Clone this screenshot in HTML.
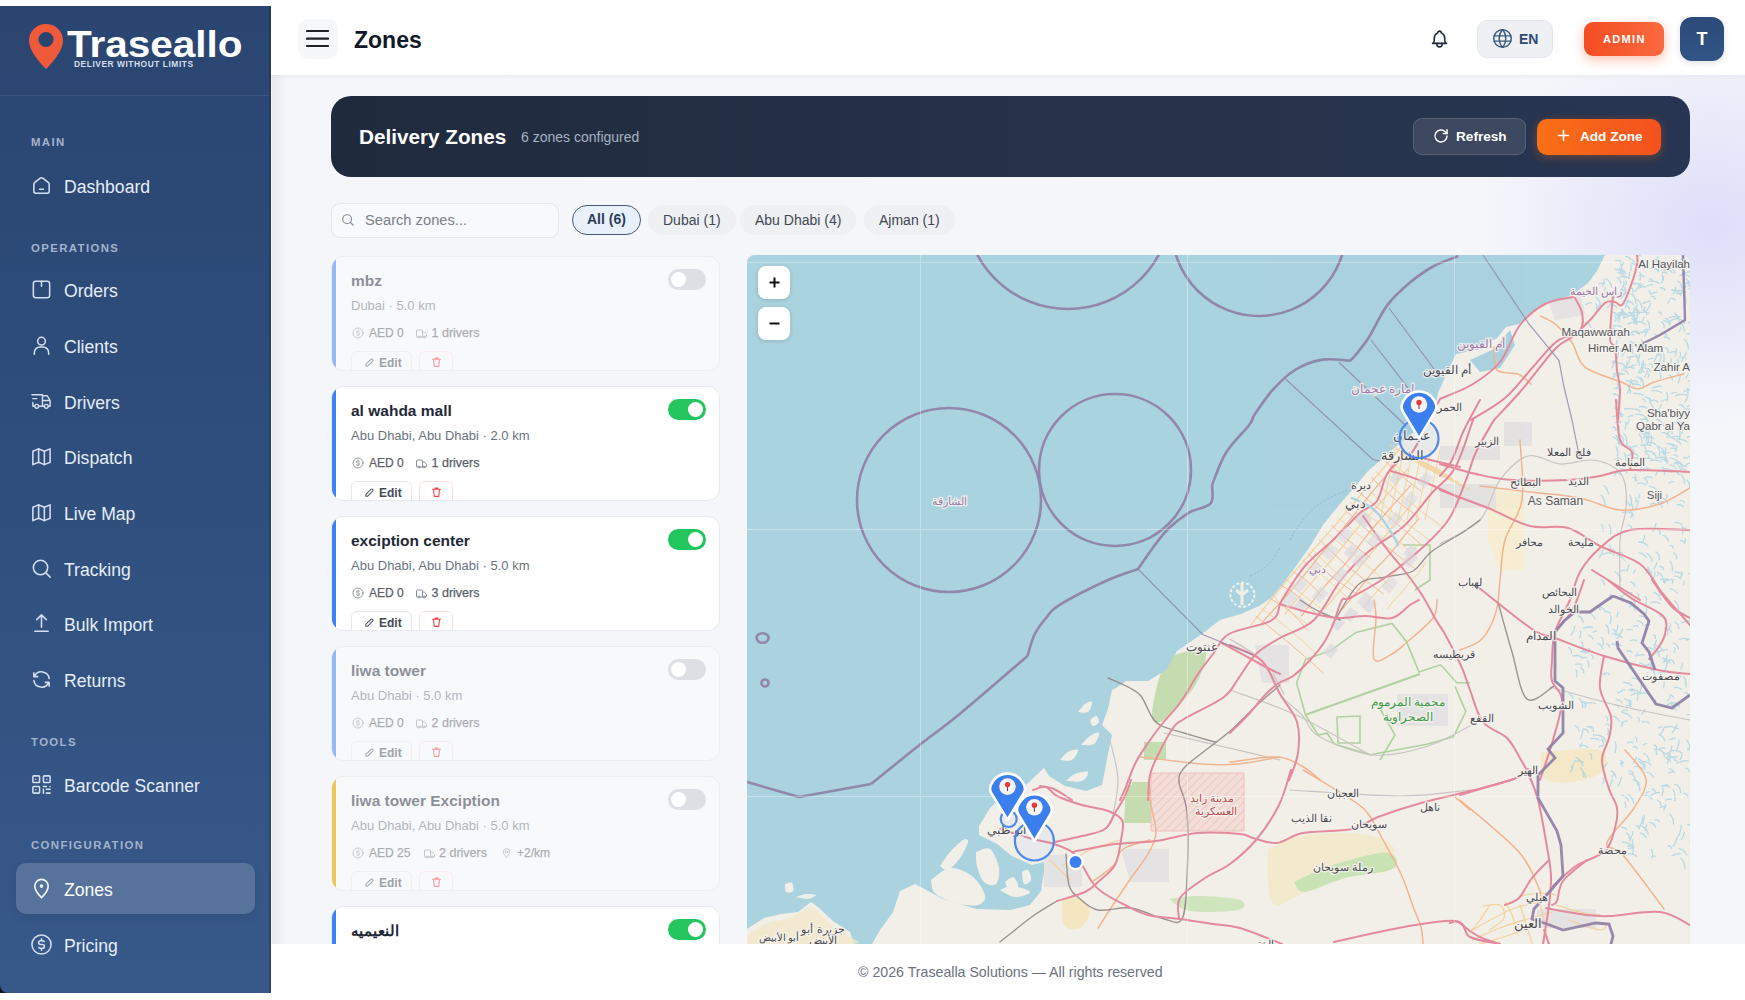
<!DOCTYPE html>
<html><head><meta charset="utf-8">
<style>
*{box-sizing:border-box;margin:0;padding:0}
html,body{width:1745px;height:1000px;overflow:hidden;background:#fff;font-family:"Liberation Sans",sans-serif}
svg{display:block}
#sb{position:absolute;left:0;top:6px;width:271px;height:987px;background:linear-gradient(180deg,#2a4570 0%,#2e4d7b 40%,#37598a 100%);border-bottom-left-radius:8px;overflow:hidden}
#sb .dv{position:absolute;left:0;top:89px;width:271px;height:1px;background:rgba(255,255,255,0.08)}
.sec{position:absolute;left:31px;font-size:11.4px;line-height:12px;font-weight:700;letter-spacing:1.38px;color:#a3b3cb;margin-top:-1px}
.it{position:absolute;left:64px;font-size:17.6px;line-height:20px;color:#e6edf7;white-space:nowrap;margin-top:1px}
.ic{position:absolute;left:30px;width:23px;height:23px;margin-top:-2px}
.ic svg{width:23px;height:23px}
.act{position:absolute;left:16px;width:239px;height:51px;border-radius:10px;background:rgba(255,255,255,0.17);box-shadow:0 4px 10px rgba(0,0,0,0.08)}
#hdr{position:absolute;left:271px;top:0;width:1474px;height:75px;background:#fff;}
#main{position:absolute;left:271px;top:75px;width:1474px;height:869px;background:radial-gradient(ellipse 230px 200px at 1440px 150px,rgba(214,214,250,0.75),rgba(214,214,250,0) 100%),#f5f6fa}
#foot{position:absolute;left:271px;top:944px;width:1474px;height:56px;background:#fff}
.card{position:absolute;left:331px;width:389px;height:115px;background:#fff;border:1px solid #e7e9ed;border-radius:12px;overflow:hidden}
.card .lb{position:absolute;left:-1px;top:-1px;bottom:-1px;width:5px;background:#3b82f6}
.card .t{position:absolute;left:19px;top:15px;font-size:15.5px;line-height:18px;font-weight:700;color:#1f2937;white-space:nowrap}
.card .s{position:absolute;left:19px;top:41px;font-size:13px;line-height:16px;color:#6b7280;white-space:nowrap}
.card .st{position:absolute;left:19px;top:68px;height:16px;white-space:nowrap}
.card .st span{position:absolute;top:0;font-size:12px;line-height:16px;font-weight:400;color:#5b616b;-webkit-text-stroke:0.25px #5b616b}
.card .st svg{position:absolute;top:2px}
.card .eb{position:absolute;left:19px;top:94px;width:61px;height:28px;border:1px solid #e5e7eb;border-radius:6px}
.card .eb span{position:absolute;left:27px;top:4px;font-size:12px;line-height:14px;font-weight:700;color:#454c58}
.card .eb svg{position:absolute;left:12px;top:5px}
.card .tb{position:absolute;left:87px;top:94px;width:34px;height:28px;border:1px solid #fadcdc;border-radius:6px}
.card .tb svg{position:absolute;left:11px;top:4px}
.tg{position:absolute;left:336px;top:12px;width:38px;height:21px;border-radius:11px;background:#22c55e}
.tg:after{content:"";position:absolute;right:3px;top:3px;width:15px;height:15px;border-radius:50%;background:#fff}
.tg.off{background:#dcdfe4}
.tg.off:after{right:auto;left:3px}
.card.off{background:#f8f9fb;border-color:#eceef1}
.card.off .fade{opacity:.5}
.card.off .lb{opacity:1}
.pill{position:absolute;top:205px;height:30px;border-radius:15px;font-size:14px;line-height:28px;font-weight:400;color:#3f4754;padding:0 14px;white-space:nowrap;background:#eff0f3;border:1px solid #eff0f3}
.pill.on{background:#e8f0fb;border:1.5px solid #475a72;color:#2c3e55;line-height:27px;font-weight:700}
.zb{position:absolute;left:758px;width:32px;height:33px;background:#fff;border-radius:8px;box-shadow:0 1px 4px rgba(0,0,0,0.15)}

</style></head><body>
<div id="hdr"></div>
<div id="main"></div>
<div style="position:absolute;left:271px;top:75px;width:1474px;height:4px;background:linear-gradient(180deg,rgba(0,0,0,0.035),rgba(0,0,0,0))"></div>
<div id="foot"></div>

<div style="position:absolute;left:272px;top:75px;width:16px;height:869px;background:linear-gradient(90deg,rgba(60,70,100,0.07),rgba(60,70,100,0))"></div>
<!-- SIDEBAR -->
<div style="position:absolute;left:0;top:979px;width:12px;height:14px;background:#0d1420"></div>
<div id="sb">
  <div class="dv"></div>
  <div style="position:absolute;right:0;top:0;width:2px;height:100%;background:rgba(25,38,60,0.32)"></div>
</div>
<div style="position:absolute;left:0;top:6px;width:271px;height:987px;pointer-events:none">
  <!-- logo -->
  <svg class="abs" style="position:absolute;left:27px;top:16px" width="40" height="50" viewBox="0 0 40 50">
    <path d="M19 2C9.6 2 2 9.4 2 18.6c0 11.2 13.2 24.8 17 28.6c3.8-3.8 17-17.4 17-28.6C36 9.4 28.4 2 19 2z" fill="#f05a3a"/>
    <circle cx="19" cy="17.5" r="7.6" fill="#2a4570"/>
  </svg>
  <div style="position:absolute;left:67px;top:19px;font-size:36px;line-height:40px;font-weight:700;color:#fff;transform:scaleX(1.125);transform-origin:0 0">Traseallo</div>
  <div style="position:absolute;left:74px;top:53px;font-size:8.4px;line-height:10px;font-weight:700;color:#d5deea;letter-spacing:0.55px">DELIVER WITHOUT LIMITS</div>

  <div class="sec" style="top:131px">MAIN</div>
  <div class="ic" style="top:170px"><svg width="19" height="19" viewBox="0 0 24 24" fill="none" stroke="#d5dff0" stroke-width="1.6" stroke-linecap="round" stroke-linejoin="round"><path d="M19 8.71l-5.333-4.148a2.666 2.666 0 0 0-3.274 0L5.06 8.71a2.665 2.665 0 0 0-1.03 2.105v7.2a2 2 0 0 0 2 2h12a2 2 0 0 0 2-2v-7.2c0-.823-.38-1.6-1.03-2.105"/><path d="M10 16h4"/></svg></div>
  <div class="it" style="top:170px">Dashboard</div>

  <div class="sec" style="top:237px">OPERATIONS</div>
  <div class="ic" style="top:274px"><svg width="19" height="19" viewBox="0 0 24 24" fill="none" stroke="#d5dff0" stroke-width="1.6" stroke-linecap="round" stroke-linejoin="round"><rect x="3.5" y="3.5" width="17" height="17" rx="2.5"/><path d="M12 3.5v5"/></svg></div>
  <div class="it" style="top:274px">Orders</div>
  <div class="ic" style="top:330px"><svg width="19" height="19" viewBox="0 0 24 24" fill="none" stroke="#d5dff0" stroke-width="1.6" stroke-linecap="round" stroke-linejoin="round"><circle cx="12" cy="7.5" r="4"/><path d="M4.5 21v-1.5a6 6 0 0 1 6-6h3a6 6 0 0 1 6 6V21"/></svg></div>
  <div class="it" style="top:330px">Clients</div>
  <div class="ic" style="top:386px;left:30px;width:23px"><svg width="23" height="21" viewBox="0 0 24 24" fill="none" stroke="#d5dff0" stroke-width="1.5" stroke-linecap="round" stroke-linejoin="round"><path d="M5 17a2 2 0 1 0 4 0a2 2 0 1 0-4 0"/><path d="M15 17a2 2 0 1 0 4 0a2 2 0 1 0-4 0"/><path d="M5 17h-2v-4m-1-8h11v12m-4 0h6m4 0h2v-6h-8m0-5h5l3 5"/><path d="M3 9h4"/></svg></div>
  <div class="it" style="top:386px">Drivers</div>
  <div class="ic" style="top:441px"><svg width="19" height="19" viewBox="0 0 24 24" fill="none" stroke="#d5dff0" stroke-width="1.6" stroke-linecap="round" stroke-linejoin="round"><path d="M3 6.5l6-2.5 6 2.5 6-2.5v14l-6 2.5-6-2.5-6 2.5z"/><path d="M9 4v14M15 6.5v14"/></svg></div>
  <div class="it" style="top:441px">Dispatch</div>
  <div class="ic" style="top:497px"><svg width="19" height="19" viewBox="0 0 24 24" fill="none" stroke="#d5dff0" stroke-width="1.6" stroke-linecap="round" stroke-linejoin="round"><path d="M3 6.5l6-2.5 6 2.5 6-2.5v14l-6 2.5-6-2.5-6 2.5z"/><path d="M9 4v14M15 6.5v14"/></svg></div>
  <div class="it" style="top:497px">Live Map</div>
  <div class="ic" style="top:553px"><svg width="19" height="19" viewBox="0 0 24 24" fill="none" stroke="#d5dff0" stroke-width="1.6" stroke-linecap="round" stroke-linejoin="round"><circle cx="11" cy="11" r="7.5"/><path d="M16.5 16.5L21 21"/></svg></div>
  <div class="it" style="top:553px">Tracking</div>
  <div class="ic" style="top:608px"><svg width="19" height="19" viewBox="0 0 24 24" fill="none" stroke="#d5dff0" stroke-width="1.6" stroke-linecap="round" stroke-linejoin="round"><path d="M5 20h14M12 16V3M7 8l5-5 5 5"/></svg></div>
  <div class="it" style="top:608px">Bulk Import</div>
  <div class="ic" style="top:664px"><svg width="19" height="19" viewBox="0 0 24 24" fill="none" stroke="#d5dff0" stroke-width="1.6" stroke-linecap="round" stroke-linejoin="round"><path d="M20 11A8.1 8.1 0 0 0 4.5 9M4 5v4h4"/><path d="M4 13a8.1 8.1 0 0 0 15.5 2m.5 4v-4h-4"/></svg></div>
  <div class="it" style="top:664px">Returns</div>

  <div class="sec" style="top:731px">TOOLS</div>
  <div class="ic" style="top:769px"><svg width="19" height="19" viewBox="0 0 24 24" fill="none" stroke="#d5dff0" stroke-width="1.6" stroke-linecap="round" stroke-linejoin="round"><rect x="3" y="3" width="7" height="7" rx="1"/><rect x="3" y="14" width="7" height="7" rx="1"/><rect x="14" y="3" width="7" height="7" rx="1"/><path d="M6 6.5v.01M6 17.5v.01M17.5 6.5v.01M14 14h3M21 14v.01M14 17v4M17 17h4M17 21h4"/></svg></div>
  <div class="it" style="top:769px">Barcode Scanner</div>

  <div class="sec" style="top:834px">CONFIGURATION</div>
  <div class="act" style="top:857px"></div>
  <div class="ic" style="top:873px"><svg width="19" height="19" viewBox="0 0 24 24" fill="none" stroke="#f2f6fc" stroke-width="1.7" stroke-linecap="round" stroke-linejoin="round"><path d="M12 21.5s-7-6.6-7-12a7 7 0 0 1 14 0c0 5.4-7 12-7 12z"/><circle cx="12" cy="9.5" r="1" fill="#f2f6fc"/></svg></div>
  <div class="it" style="top:873px;color:#fff">Zones</div>
  <div class="ic" style="top:929px"><svg width="19" height="19" viewBox="0 0 24 24" fill="none" stroke="#d5dff0" stroke-width="1.6" stroke-linecap="round" stroke-linejoin="round"><circle cx="12" cy="12" r="10"/><path d="M14.8 9a2 2 0 0 0-1.8-1h-2a2 2 0 0 0 0 4h2a2 2 0 0 1 0 4h-2a2 2 0 0 1-1.8-1M12 6v2M12 16v2"/></svg></div>
  <div class="it" style="top:929px">Pricing</div>
</div>

<!-- HEADER CONTENT -->
<div style="position:absolute;left:298px;top:19px;width:40px;height:40px;border-radius:10px;background:#f6f7f9"></div>
<svg style="position:absolute;left:306px;top:29px" width="23" height="20" viewBox="0 0 23 20"><path d="M1 2h21M1 9.6h21M1 17h21" stroke="#222" stroke-width="2.2" stroke-linecap="round"/></svg>
<div style="position:absolute;left:354px;top:27px;font-size:23px;line-height:26px;font-weight:700;color:#111827">Zones</div>

<svg style="position:absolute;left:1429px;top:28px" width="21" height="22" viewBox="0 0 24 24" fill="none" stroke="#1f2937" stroke-width="1.8" stroke-linecap="round" stroke-linejoin="round"><path d="M10 5a2 2 0 1 1 4 0a7 7 0 0 1 4 6v3a4 4 0 0 0 2 3H4a4 4 0 0 0 2-3v-3a7 7 0 0 1 4-6"/><path d="M9 17v1a3 3 0 0 0 6 0v-1"/></svg>
<div style="position:absolute;left:1477px;top:20px;width:76px;height:38px;border-radius:10px;background:#eef0f4;border:1px solid #e1e4e9"></div>
<svg style="position:absolute;left:1492px;top:28px" width="21" height="21" viewBox="0 0 24 24" fill="none" stroke="#3d5a80" stroke-width="1.7" stroke-linecap="round" stroke-linejoin="round"><circle cx="12" cy="12" r="10"/><path d="M2.6 9h18.8M2.6 15h18.8M11.5 2a17 17 0 0 0 0 20M12.5 2a17 17 0 0 1 0 20"/></svg>
<div style="position:absolute;left:1519px;top:31px;font-size:14px;line-height:16px;font-weight:700;color:#2d4a75">EN</div>
<div style="position:absolute;left:1584px;top:22px;width:80px;height:34px;border-radius:9px;background:linear-gradient(90deg,#f44d22,#fb6a3f);box-shadow:0 4px 12px rgba(244,80,30,0.35)"></div>
<div style="position:absolute;left:1603px;top:33px;font-size:11px;line-height:12px;font-weight:700;color:#fff;letter-spacing:1.35px">ADMIN</div>
<div style="position:absolute;left:1680px;top:17px;width:44px;height:44px;border-radius:12px;background:linear-gradient(180deg,#2b4a78,#315587);box-shadow:0 2px 6px rgba(0,0,0,0.12)"></div>
<div style="position:absolute;left:1680px;top:28px;width:44px;text-align:center;font-size:18px;line-height:22px;font-weight:700;color:#fff">T</div>

<!-- BANNER -->
<div style="position:absolute;left:331px;top:96px;width:1359px;height:81px;border-radius:20px;background:linear-gradient(90deg,#1f2a3d,#263349 60%,#283552)"></div>
<div style="position:absolute;left:359px;top:125px;font-size:20.7px;line-height:24px;font-weight:700;color:#fff">Delivery Zones</div>
<div style="position:absolute;left:521px;top:129px;font-size:14px;line-height:16px;color:#a8b2c2">6 zones configured</div>
<div style="position:absolute;left:1413px;top:118px;width:113px;height:37px;border-radius:9px;background:rgba(255,255,255,0.1);border:1px solid rgba(255,255,255,0.14)"></div>
<svg style="position:absolute;left:1432px;top:127px" width="18" height="18" viewBox="0 0 24 24" fill="none" stroke="#fff" stroke-width="2" stroke-linecap="round" stroke-linejoin="round"><path d="M20 12a8 8 0 1 1-2.3-5.6L20 8.5"/><path d="M20 3.5v5h-5"/></svg>
<div style="position:absolute;left:1456px;top:129px;font-size:13.6px;line-height:16px;font-weight:700;color:#fff">Refresh</div>
<div style="position:absolute;left:1537px;top:119px;width:124px;height:36px;border-radius:10px;background:linear-gradient(90deg,#f97016,#f4511e);box-shadow:0 2px 10px rgba(249,112,22,0.35)"></div>
<svg style="position:absolute;left:1557px;top:129px" width="13" height="13" viewBox="0 0 13 13"><path d="M6.5 1.5v10M1.5 6.5h10" stroke="#fff" stroke-width="1.6" stroke-linecap="round"/></svg>
<div style="position:absolute;left:1580px;top:129px;font-size:13.6px;line-height:16px;font-weight:700;color:#fff">Add Zone</div>

<!-- SEARCH + PILLS -->
<div style="position:absolute;left:331px;top:203px;width:228px;height:35px;border-radius:9px;background:#f8f9fb;border:1px solid #e3e6ea"></div>
<svg style="position:absolute;left:341px;top:213px" width="14" height="14" viewBox="0 0 24 24" fill="none" stroke="#8a9099" stroke-width="2" stroke-linecap="round"><circle cx="10.5" cy="10.5" r="7.5"/><path d="M16 16l5 5"/></svg>
<div style="position:absolute;left:365px;top:212px;font-size:14.7px;line-height:17px;color:#7b818a">Search zones...</div>
<div class="pill on" style="left:572px">All (6)</div>
<div class="pill" style="left:648px">Dubai (1)</div>
<div class="pill" style="left:740px">Abu Dhabi (4)</div>
<div class="pill" style="left:864px">Ajman (1)</div>

<!-- CARDS -->
<div class="card off" style="top:256px">
<div class="lb" style="background:#93b8f5"></div>
<div class="fade">
<div class="t" >mbz</div>
<div class="s">Dubai · 5.0 km</div>
<div class="st"><div class="abs" style="position:absolute;left:1px;top:0"><svg width="12" height="12" viewBox="0 0 24 24" fill="none" stroke="#8b919a" stroke-width="1.8" stroke-linecap="round"><circle cx="12" cy="12" r="10"/><path d="M14.8 9a2 2 0 0 0-1.8-1h-2a2 2 0 0 0 0 4h2a2 2 0 0 1 0 4h-2a2 2 0 0 1-1.8-1M12 6v2M12 16v2"/></svg></div><span style="left:18px">AED 0</span><div style="position:absolute;left:64.0px;top:1px"><svg width="13" height="12" viewBox="0 0 24 24" fill="none" stroke="#8b919a" stroke-width="2" stroke-linecap="round" stroke-linejoin="round"><path d="M14 18V6a2 2 0 0 0-2-2H4a2 2 0 0 0-2 2v11a1 1 0 0 0 1 1h2"/><path d="M15 18H9"/><path d="M19 18h2a1 1 0 0 0 1-1v-3.65a1 1 0 0 0-.22-.624l-3.48-4.35A1 1 0 0 0 17.52 8H14"/><circle cx="17" cy="18" r="2"/><circle cx="7" cy="18" r="2"/></svg></div><span style="left:80.5px;font-size:12.5px">1 drivers</span></div>
<div class="eb"><svg width="11" height="11" viewBox="0 0 24 24" fill="none" stroke="#4b5563" stroke-width="2.2" stroke-linecap="round" stroke-linejoin="round"><path d="M4 20h4L19 9a2.8 2.8 0 0 0-4-4L4 16z"/></svg><span>Edit</span></div>
<div class="tb"><svg width="11" height="12" viewBox="0 0 24 24" fill="none" stroke="#ef4444" stroke-width="2.4" stroke-linecap="round" stroke-linejoin="round"><path d="M3 6h18M9 6V3.5h6V6M5.5 6l1.3 14a1.5 1.5 0 0 0 1.5 1.5h7.4a1.5 1.5 0 0 0 1.5-1.5L18.5 6"/></svg></div>
</div>
<div class="tg off"></div>
</div>
<div class="card" style="top:386px">
<div class="lb" style="background:#3b82f6"></div>
<div class="fade">
<div class="t" >al wahda mall</div>
<div class="s">Abu Dhabi, Abu Dhabi · 2.0 km</div>
<div class="st"><div class="abs" style="position:absolute;left:1px;top:0"><svg width="12" height="12" viewBox="0 0 24 24" fill="none" stroke="#8b919a" stroke-width="1.8" stroke-linecap="round"><circle cx="12" cy="12" r="10"/><path d="M14.8 9a2 2 0 0 0-1.8-1h-2a2 2 0 0 0 0 4h2a2 2 0 0 1 0 4h-2a2 2 0 0 1-1.8-1M12 6v2M12 16v2"/></svg></div><span style="left:18px">AED 0</span><div style="position:absolute;left:64.0px;top:1px"><svg width="13" height="12" viewBox="0 0 24 24" fill="none" stroke="#8b919a" stroke-width="2" stroke-linecap="round" stroke-linejoin="round"><path d="M14 18V6a2 2 0 0 0-2-2H4a2 2 0 0 0-2 2v11a1 1 0 0 0 1 1h2"/><path d="M15 18H9"/><path d="M19 18h2a1 1 0 0 0 1-1v-3.65a1 1 0 0 0-.22-.624l-3.48-4.35A1 1 0 0 0 17.52 8H14"/><circle cx="17" cy="18" r="2"/><circle cx="7" cy="18" r="2"/></svg></div><span style="left:80.5px;font-size:12.5px">1 drivers</span></div>
<div class="eb"><svg width="11" height="11" viewBox="0 0 24 24" fill="none" stroke="#4b5563" stroke-width="2.2" stroke-linecap="round" stroke-linejoin="round"><path d="M4 20h4L19 9a2.8 2.8 0 0 0-4-4L4 16z"/></svg><span>Edit</span></div>
<div class="tb"><svg width="11" height="12" viewBox="0 0 24 24" fill="none" stroke="#ef4444" stroke-width="2.4" stroke-linecap="round" stroke-linejoin="round"><path d="M3 6h18M9 6V3.5h6V6M5.5 6l1.3 14a1.5 1.5 0 0 0 1.5 1.5h7.4a1.5 1.5 0 0 0 1.5-1.5L18.5 6"/></svg></div>
</div>
<div class="tg"></div>
</div>
<div class="card" style="top:516px">
<div class="lb" style="background:#3b82f6"></div>
<div class="fade">
<div class="t" >exciption center</div>
<div class="s">Abu Dhabi, Abu Dhabi · 5.0 km</div>
<div class="st"><div class="abs" style="position:absolute;left:1px;top:0"><svg width="12" height="12" viewBox="0 0 24 24" fill="none" stroke="#8b919a" stroke-width="1.8" stroke-linecap="round"><circle cx="12" cy="12" r="10"/><path d="M14.8 9a2 2 0 0 0-1.8-1h-2a2 2 0 0 0 0 4h2a2 2 0 0 1 0 4h-2a2 2 0 0 1-1.8-1M12 6v2M12 16v2"/></svg></div><span style="left:18px">AED 0</span><div style="position:absolute;left:64.0px;top:1px"><svg width="13" height="12" viewBox="0 0 24 24" fill="none" stroke="#8b919a" stroke-width="2" stroke-linecap="round" stroke-linejoin="round"><path d="M14 18V6a2 2 0 0 0-2-2H4a2 2 0 0 0-2 2v11a1 1 0 0 0 1 1h2"/><path d="M15 18H9"/><path d="M19 18h2a1 1 0 0 0 1-1v-3.65a1 1 0 0 0-.22-.624l-3.48-4.35A1 1 0 0 0 17.52 8H14"/><circle cx="17" cy="18" r="2"/><circle cx="7" cy="18" r="2"/></svg></div><span style="left:80.5px;font-size:12.5px">3 drivers</span></div>
<div class="eb"><svg width="11" height="11" viewBox="0 0 24 24" fill="none" stroke="#4b5563" stroke-width="2.2" stroke-linecap="round" stroke-linejoin="round"><path d="M4 20h4L19 9a2.8 2.8 0 0 0-4-4L4 16z"/></svg><span>Edit</span></div>
<div class="tb"><svg width="11" height="12" viewBox="0 0 24 24" fill="none" stroke="#ef4444" stroke-width="2.4" stroke-linecap="round" stroke-linejoin="round"><path d="M3 6h18M9 6V3.5h6V6M5.5 6l1.3 14a1.5 1.5 0 0 0 1.5 1.5h7.4a1.5 1.5 0 0 0 1.5-1.5L18.5 6"/></svg></div>
</div>
<div class="tg"></div>
</div>
<div class="card off" style="top:646px">
<div class="lb" style="background:#93b8f5"></div>
<div class="fade">
<div class="t" >liwa tower</div>
<div class="s">Abu Dhabi · 5.0 km</div>
<div class="st"><div class="abs" style="position:absolute;left:1px;top:0"><svg width="12" height="12" viewBox="0 0 24 24" fill="none" stroke="#8b919a" stroke-width="1.8" stroke-linecap="round"><circle cx="12" cy="12" r="10"/><path d="M14.8 9a2 2 0 0 0-1.8-1h-2a2 2 0 0 0 0 4h2a2 2 0 0 1 0 4h-2a2 2 0 0 1-1.8-1M12 6v2M12 16v2"/></svg></div><span style="left:18px">AED 0</span><div style="position:absolute;left:64.0px;top:1px"><svg width="13" height="12" viewBox="0 0 24 24" fill="none" stroke="#8b919a" stroke-width="2" stroke-linecap="round" stroke-linejoin="round"><path d="M14 18V6a2 2 0 0 0-2-2H4a2 2 0 0 0-2 2v11a1 1 0 0 0 1 1h2"/><path d="M15 18H9"/><path d="M19 18h2a1 1 0 0 0 1-1v-3.65a1 1 0 0 0-.22-.624l-3.48-4.35A1 1 0 0 0 17.52 8H14"/><circle cx="17" cy="18" r="2"/><circle cx="7" cy="18" r="2"/></svg></div><span style="left:80.5px;font-size:12.5px">2 drivers</span></div>
<div class="eb"><svg width="11" height="11" viewBox="0 0 24 24" fill="none" stroke="#4b5563" stroke-width="2.2" stroke-linecap="round" stroke-linejoin="round"><path d="M4 20h4L19 9a2.8 2.8 0 0 0-4-4L4 16z"/></svg><span>Edit</span></div>
<div class="tb"><svg width="11" height="12" viewBox="0 0 24 24" fill="none" stroke="#ef4444" stroke-width="2.4" stroke-linecap="round" stroke-linejoin="round"><path d="M3 6h18M9 6V3.5h6V6M5.5 6l1.3 14a1.5 1.5 0 0 0 1.5 1.5h7.4a1.5 1.5 0 0 0 1.5-1.5L18.5 6"/></svg></div>
</div>
<div class="tg off"></div>
</div>
<div class="card off" style="top:776px">
<div class="lb" style="background:#ebc659"></div>
<div class="fade">
<div class="t" >liwa tower Exciption</div>
<div class="s">Abu Dhabi, Abu Dhabi · 5.0 km</div>
<div class="st"><div class="abs" style="position:absolute;left:1px;top:0"><svg width="12" height="12" viewBox="0 0 24 24" fill="none" stroke="#8b919a" stroke-width="1.8" stroke-linecap="round"><circle cx="12" cy="12" r="10"/><path d="M14.8 9a2 2 0 0 0-1.8-1h-2a2 2 0 0 0 0 4h2a2 2 0 0 1 0 4h-2a2 2 0 0 1-1.8-1M12 6v2M12 16v2"/></svg></div><span style="left:18px">AED 25</span><div style="position:absolute;left:71.5px;top:1px"><svg width="13" height="12" viewBox="0 0 24 24" fill="none" stroke="#8b919a" stroke-width="2" stroke-linecap="round" stroke-linejoin="round"><path d="M14 18V6a2 2 0 0 0-2-2H4a2 2 0 0 0-2 2v11a1 1 0 0 0 1 1h2"/><path d="M15 18H9"/><path d="M19 18h2a1 1 0 0 0 1-1v-3.65a1 1 0 0 0-.22-.624l-3.48-4.35A1 1 0 0 0 17.52 8H14"/><circle cx="17" cy="18" r="2"/><circle cx="7" cy="18" r="2"/></svg></div><span style="left:88.0px;font-size:12.5px">2 drivers</span><div style="position:absolute;left:150.0px;top:0"><svg width="11" height="12" viewBox="0 0 24 24" fill="none" stroke="#8b919a" stroke-width="2" stroke-linecap="round"><path d="M12 21.5s-7-6.6-7-12a7 7 0 0 1 14 0c0 5.4-7 12-7 12z"/><circle cx="12" cy="9.5" r="2.5"/></svg></div><span style="left:166.0px;font-weight:400">+2/km</span></div>
<div class="eb"><svg width="11" height="11" viewBox="0 0 24 24" fill="none" stroke="#4b5563" stroke-width="2.2" stroke-linecap="round" stroke-linejoin="round"><path d="M4 20h4L19 9a2.8 2.8 0 0 0-4-4L4 16z"/></svg><span>Edit</span></div>
<div class="tb"><svg width="11" height="12" viewBox="0 0 24 24" fill="none" stroke="#ef4444" stroke-width="2.4" stroke-linecap="round" stroke-linejoin="round"><path d="M3 6h18M9 6V3.5h6V6M5.5 6l1.3 14a1.5 1.5 0 0 0 1.5 1.5h7.4a1.5 1.5 0 0 0 1.5-1.5L18.5 6"/></svg></div>
</div>
<div class="tg off"></div>
</div>
<div class="card" style="top:906px">
<div class="lb" style="background:#3b82f6"></div>
<div class="fade">
<div class="t" style="font-size:15px">النعيميه</div>
<div class="s">Abu Dhabi · 5.0 km</div>
<div class="st"><div class="abs" style="position:absolute;left:1px;top:0"><svg width="12" height="12" viewBox="0 0 24 24" fill="none" stroke="#8b919a" stroke-width="1.8" stroke-linecap="round"><circle cx="12" cy="12" r="10"/><path d="M14.8 9a2 2 0 0 0-1.8-1h-2a2 2 0 0 0 0 4h2a2 2 0 0 1 0 4h-2a2 2 0 0 1-1.8-1M12 6v2M12 16v2"/></svg></div><span style="left:18px">AED 0</span><div style="position:absolute;left:64.0px;top:1px"><svg width="13" height="12" viewBox="0 0 24 24" fill="none" stroke="#8b919a" stroke-width="2" stroke-linecap="round" stroke-linejoin="round"><path d="M14 18V6a2 2 0 0 0-2-2H4a2 2 0 0 0-2 2v11a1 1 0 0 0 1 1h2"/><path d="M15 18H9"/><path d="M19 18h2a1 1 0 0 0 1-1v-3.65a1 1 0 0 0-.22-.624l-3.48-4.35A1 1 0 0 0 17.52 8H14"/><circle cx="17" cy="18" r="2"/><circle cx="7" cy="18" r="2"/></svg></div><span style="left:80.5px;font-size:12.5px">1 drivers</span></div>
<div class="eb"><svg width="11" height="11" viewBox="0 0 24 24" fill="none" stroke="#4b5563" stroke-width="2.2" stroke-linecap="round" stroke-linejoin="round"><path d="M4 20h4L19 9a2.8 2.8 0 0 0-4-4L4 16z"/></svg><span>Edit</span></div>
<div class="tb"><svg width="11" height="12" viewBox="0 0 24 24" fill="none" stroke="#ef4444" stroke-width="2.4" stroke-linecap="round" stroke-linejoin="round"><path d="M3 6h18M9 6V3.5h6V6M5.5 6l1.3 14a1.5 1.5 0 0 0 1.5 1.5h7.4a1.5 1.5 0 0 0 1.5-1.5L18.5 6"/></svg></div>
</div>
<div class="tg"></div>
</div>

<!-- MAP -->
<div style="position:absolute;left:747px;top:255px;width:943px;height:689px;border-radius:8px 8px 0 0;overflow:hidden;background:#aad3df">
<svg width="943" height="689" viewBox="747 255 943 689" style="position:absolute;left:0;top:0">
<defs><pattern id="hatch" width="6" height="6" patternUnits="userSpaceOnUse" patternTransform="rotate(45)"><rect width="6" height="6" fill="#f3ddd8"/><line x1="0" y1="0" x2="0" y2="6" stroke="#e9b9b0" stroke-width="1.2"/></pattern></defs>
<rect x="747" y="255" width="943" height="689" fill="#f2efe9"/>
<path d="M1268.0,850.0 C1273.3,847.7 1284.7,838.7 1300.0,836.0 C1315.3,833.3 1344.7,832.5 1360.0,834.0 C1375.3,835.5 1387.3,839.0 1392.0,845.0 C1396.7,851.0 1396.7,864.5 1388.0,870.0 C1379.3,875.5 1354.7,873.8 1340.0,878.0 C1325.3,882.2 1310.8,890.5 1300.0,895.0 C1289.2,899.5 1280.3,907.5 1275.0,905.0 C1269.7,902.5 1269.2,889.2 1268.0,880.0 C1266.8,870.8 1268.0,855.0 1268.0,850.0Z" fill="#f3e9cc" />
<path d="M1541.0,752.0 C1550.8,751.7 1589.8,746.7 1600.0,750.0 C1610.2,753.3 1607.0,766.7 1602.0,772.0 C1597.0,777.3 1579.5,781.0 1570.0,782.0 C1560.5,783.0 1549.8,783.0 1545.0,778.0 C1540.2,773.0 1541.7,756.3 1541.0,752.0Z" fill="#f4e8c8" />
<path d="M1488.0,490.0 L1524.0,492.0 L1524.0,570.0 L1500.0,570.0 L1488.0,540.0Z" fill="#f6edd3" />
<path d="M1062.0,901.0 C1065.0,900.5 1075.3,896.2 1080.0,898.0 C1084.7,899.8 1090.0,907.0 1090.0,912.0 C1090.0,917.0 1084.3,925.8 1080.0,928.0 C1075.7,930.2 1067.0,929.5 1064.0,925.0 C1061.0,920.5 1062.3,905.0 1062.0,901.0Z" fill="#f4e6c0" />
<path d="M1294.0,882.0 C1300.0,879.3 1315.7,870.8 1330.0,866.0 C1344.3,861.2 1369.0,854.3 1380.0,853.0 C1391.0,851.7 1394.3,855.2 1396.0,858.0 C1397.7,860.8 1398.5,866.7 1390.0,870.0 C1381.5,873.3 1359.2,874.3 1345.0,878.0 C1330.8,881.7 1313.5,891.3 1305.0,892.0 C1296.5,892.7 1295.8,883.7 1294.0,882.0Z" fill="#c9e3b5" />
<path d="M1167.0,658.0 C1170.0,657.0 1178.7,653.3 1185.0,652.0 C1191.3,650.7 1202.0,647.3 1205.0,650.0 C1208.0,652.7 1205.2,661.3 1203.0,668.0 C1200.8,674.7 1197.2,682.7 1192.0,690.0 C1186.8,697.3 1177.3,706.7 1172.0,712.0 C1166.7,717.3 1163.3,721.0 1160.0,722.0 C1156.7,723.0 1152.7,723.3 1152.0,718.0 C1151.3,712.7 1154.3,698.0 1156.0,690.0 C1157.7,682.0 1160.2,675.3 1162.0,670.0 C1163.8,664.7 1166.2,660.0 1167.0,658.0Z" fill="#c5dcb0" />
<path d="M1144.0,742.0 L1166.0,742.0 L1166.0,760.0 L1144.0,760.0Z" fill="#c5dcb0" />
<path d="M1126.0,785.0 L1151.0,785.0 L1151.0,823.0 L1124.0,823.0Z" fill="#c5dcb0" />
<path d="M1132.0,782.0 L1148.0,782.0 L1148.0,800.0 L1132.0,800.0Z" fill="#c5dcb0" />
<path d="M1169.0,899.0 C1174.2,898.5 1188.2,895.8 1200.0,896.0 C1211.8,896.2 1233.7,897.7 1240.0,900.0 C1246.3,902.3 1246.3,908.2 1238.0,910.0 C1229.7,911.8 1201.5,912.8 1190.0,911.0 C1178.5,909.2 1172.5,901.0 1169.0,899.0Z" fill="#cfe5bd" />
<path d="M1151.0,773.0 L1244.0,773.0 L1244.0,831.0 L1151.0,831.0Z" fill="url(#hatch)" stroke="#eec2bb" stroke-width="1"/>
<path d="M1255.0,645.0 L1289.0,645.0 L1289.0,683.0 L1262.0,683.0Z" fill="#e2dfe0" opacity="0.85"/>
<path d="M1121.0,849.0 L1169.0,849.0 L1169.0,882.0 L1130.0,882.0Z" fill="#e2dfe0" opacity="0.85"/>
<path d="M1044.0,855.0 L1082.0,855.0 L1082.0,887.0 L1044.0,887.0Z" fill="#e2dfe0" opacity="0.85"/>
<path d="M1397.0,694.0 L1448.0,694.0 L1448.0,726.0 L1397.0,726.0Z" fill="#e2dfe0" opacity="0.85"/>
<path d="M1504.0,422.0 L1532.0,422.0 L1532.0,446.0 L1504.0,446.0Z" fill="#e2dfe0" opacity="0.85"/>
<path d="M1440.0,484.0 L1496.0,484.0 L1496.0,508.0 L1440.0,508.0Z" fill="#e2dfe0" opacity="0.85"/>
<path d="M1440.0,446.0 L1500.0,446.0 L1500.0,460.0 L1440.0,460.0Z" fill="#e2dfe0" opacity="0.85"/>
<path d="M1537.0,909.0 L1596.0,909.0 L1596.0,928.0 L1537.0,928.0Z" fill="#e2dfe0" opacity="0.85"/>
<path d="M1548.0,300.0 L1580.0,292.0 L1585.0,315.0 L1555.0,320.0Z" fill="#e2dfe0" opacity="0.85"/>
<path d="M1605.0,255.0 L1597.0,271.0 L1588.0,283.0 L1572.0,295.0 L1555.0,300.0 L1542.0,305.0 L1532.0,314.0 L1519.0,324.0 L1506.0,327.0 L1497.0,338.0 L1480.0,348.0 L1466.0,352.0 L1456.0,354.0 L1446.0,375.0 L1438.0,393.0 L1435.0,410.0 L1429.0,419.0 L1416.0,430.0 L1403.0,441.0 L1393.0,449.0 L1382.0,459.0 L1368.0,471.0 L1354.0,488.0 L1339.0,505.0 L1323.0,525.0 L1309.0,548.0 L1296.0,566.0 L1283.0,584.0 L1271.0,598.0 L1259.0,606.0 L1241.0,614.0 L1220.0,620.0 L1202.0,634.0 L1177.0,651.0 L1166.0,670.0 L1148.0,681.0 L1126.0,681.0 L1116.0,688.0 L1112.0,690.0 L1108.0,709.0 L1102.0,725.0 L1112.0,735.0 L1107.0,759.0 L1102.0,785.0 L1086.0,791.0 L1065.0,786.0 L1049.0,776.0 L1044.0,768.0 L1024.0,787.0 L1005.0,793.0 L990.0,808.0 L979.0,826.0 L979.0,835.0 L997.0,844.0 L1012.0,856.0 L1032.0,865.0 L1044.0,862.0 L1044.0,872.0 L1041.0,891.0 L1030.0,905.0 L1010.0,910.0 L976.0,909.0 L943.0,899.0 L915.0,884.0 L900.0,891.0 L893.0,912.0 L880.0,930.0 L872.0,944.0 L854.0,944.0 L850.0,932.0 L833.0,921.0 L818.0,907.0 L811.0,902.0 L798.0,912.0 L781.0,914.0 L764.0,918.0 L747.0,929.0 L747.0,255.0Z" fill="#aad3df"/>
<path d="M747.0,936.0 C750.0,934.0 757.8,927.0 765.0,924.0 C772.2,921.0 782.3,920.7 790.0,918.0 C797.7,915.3 804.3,907.0 811.0,908.0 C817.7,909.0 823.8,919.3 830.0,924.0 C836.2,928.7 844.3,932.7 848.0,936.0 C851.7,939.3 868.8,942.7 852.0,944.0 C835.2,945.3 764.5,945.3 747.0,944.0 C729.5,942.7 747.0,937.3 747.0,936.0Z" fill="#f3e7c4" opacity="0.7"/>
<path d="M796.0,897.0 C797.7,896.5 802.7,894.3 806.0,894.0 C809.3,893.7 815.7,894.2 816.0,895.0 C816.3,895.8 811.3,898.7 808.0,899.0 C804.7,899.3 798.0,897.3 796.0,897.0Z" fill="#e8efe9" />
<path d="M940.0,866.0 C941.7,863.7 946.2,856.3 950.0,852.0 C953.8,847.7 960.0,841.7 963.0,840.0 C966.0,838.3 968.5,839.0 968.0,842.0 C967.5,845.0 963.3,853.3 960.0,858.0 C956.7,862.7 951.3,868.7 948.0,870.0 C944.7,871.3 941.3,866.7 940.0,866.0Z" fill="#f2efe9" />
<path d="M976.0,852.0 C978.3,851.5 986.2,846.3 990.0,849.0 C993.8,851.7 998.0,862.2 999.0,868.0 C1000.0,873.8 998.5,881.7 996.0,884.0 C993.5,886.3 987.2,885.0 984.0,882.0 C980.8,879.0 978.3,871.0 977.0,866.0 C975.7,861.0 976.2,854.3 976.0,852.0Z" fill="#f2efe9" />
<path d="M931.0,880.0 C934.2,878.0 943.2,868.7 950.0,868.0 C956.8,867.3 966.2,871.5 972.0,876.0 C977.8,880.5 984.0,890.2 985.0,895.0 C986.0,899.8 983.0,903.7 978.0,905.0 C973.0,906.3 962.2,905.0 955.0,903.0 C947.8,901.0 939.0,896.8 935.0,893.0 C931.0,889.2 931.7,882.2 931.0,880.0Z" fill="#f2efe9" />
<path d="M1078.0,712.0 C1079.2,710.7 1082.7,705.7 1085.0,704.0 C1087.3,702.3 1091.5,700.7 1092.0,702.0 C1092.5,703.3 1090.3,710.3 1088.0,712.0 C1085.7,713.7 1079.7,712.0 1078.0,712.0Z" fill="#f2efe9" />
<path d="M1081.0,745.0 C1082.5,743.5 1087.0,738.0 1090.0,736.0 C1093.0,734.0 1098.3,731.7 1099.0,733.0 C1099.7,734.3 1097.0,742.0 1094.0,744.0 C1091.0,746.0 1083.2,744.8 1081.0,745.0Z" fill="#f2efe9" />
<path d="M1060.0,760.0 C1061.3,758.7 1065.0,753.7 1068.0,752.0 C1071.0,750.3 1077.3,748.7 1078.0,750.0 C1078.7,751.3 1075.0,758.3 1072.0,760.0 C1069.0,761.7 1062.0,760.0 1060.0,760.0Z" fill="#f2efe9" />
<path d="M1066.0,781.0 C1067.5,779.8 1071.3,775.5 1075.0,774.0 C1078.7,772.5 1086.8,770.8 1088.0,772.0 C1089.2,773.2 1085.7,779.5 1082.0,781.0 C1078.3,782.5 1068.7,781.0 1066.0,781.0Z" fill="#f2efe9" />
<path d="M1090.0,720.0 C1091.0,719.3 1094.5,715.7 1096.0,716.0 C1097.5,716.3 1099.5,720.3 1099.0,722.0 C1098.5,723.7 1094.5,726.3 1093.0,726.0 C1091.5,725.7 1090.5,721.0 1090.0,720.0Z" fill="#f2efe9" />
<path d="M785.0,884.0 C786.2,883.8 790.7,881.8 792.0,883.0 C793.3,884.2 794.0,889.5 793.0,891.0 C792.0,892.5 787.3,893.2 786.0,892.0 C784.7,890.8 785.2,885.3 785.0,884.0Z" fill="#f2efe9" />
<path d="M1005.0,882.0 C1006.3,881.2 1010.8,876.3 1013.0,877.0 C1015.2,877.7 1018.5,883.7 1018.0,886.0 C1017.5,888.3 1012.2,891.7 1010.0,891.0 C1007.8,890.3 1005.8,883.5 1005.0,882.0Z" fill="#f2efe9" />
<path d="M1022.0,872.0 C1023.0,871.7 1026.5,868.7 1028.0,870.0 C1029.5,871.3 1031.7,877.7 1031.0,880.0 C1030.3,882.3 1025.5,885.3 1024.0,884.0 C1022.5,882.7 1022.3,874.0 1022.0,872.0Z" fill="#f2efe9" />
<path d="M1000.0,890.0 C1002.0,889.3 1007.0,885.7 1012.0,886.0 C1017.0,886.3 1029.5,890.2 1030.0,892.0 C1030.5,893.8 1020.0,897.3 1015.0,897.0 C1010.0,896.7 1002.5,891.2 1000.0,890.0Z" fill="#f2efe9" />
<path d="M1494.0,349.0 L1510.0,330.0 L1515.0,345.0 L1500.0,368.0 L1480.0,372.0 L1470.0,360.0Z" fill="#aad3df" />
<circle cx="1242.4" cy="594.8" r="12" fill="none" stroke="#eef3f3" stroke-width="2" stroke-dasharray="3 2"/>
<path d="M1242,583 v22 M1236,590 l6,5 6,-5" stroke="#f0efe6" stroke-width="3" fill="none"/>
<path d="M1290,540 q20,-40 60,-50 M1280,548 q-10,20 -30,28" fill="none" stroke="#8fb9d0" stroke-width="1" stroke-dasharray="2 2"/>
<path d="M1637.3,288.3 q6.6,-2.6 9.1,-1.2 M1653.8,334.3 q3.4,-0.2 2.7,3.5 M1614.9,348.8 q4.3,-2.2 4.5,-0.4 M1645.1,432.9 q4.4,-1.4 4.9,1.2 M1660.9,458.8 q5.4,0.6 6.8,5.2 M1688.1,266.0 q7.0,0.1 10.0,4.2 M1623.3,281.2 q1.7,1.2 -0.6,6.4 M1626.1,380.5 q5.8,0.5 7.6,5.1 M1654.7,269.4 q4.2,-1.6 4.4,0.9 M1665.1,347.5 q3.5,0.9 2.9,5.8 M1647.3,320.2 q3.0,3.1 2.0,10.2 M1631.0,378.9 q1.1,2.0 -1.9,8.0 M1668.9,317.6 q7.9,-2.1 11.8,-0.2 M1644.6,418.0 q3.7,-0.0 3.3,4.0 M1615.1,399.0 q4.4,2.4 4.8,8.9 M1680.3,323.1 q4.1,2.3 4.1,8.6 M1657.2,353.6 q-0.1,2.9 -4.1,9.9 M1649.0,398.1 q2.4,0.2 0.8,4.4 M1662.5,468.5 q6.9,-0.0 9.8,4.0 M1642.1,399.1 q3.4,-0.5 2.9,3.0 M1625.1,281.1 q2.1,0.2 0.1,4.5 M1622.1,309.0 q1.2,1.5 -1.6,7.0 M1618.3,352.1 q1.0,2.1 -2.1,8.1 M1675.9,440.9 q4.4,-0.0 4.8,4.0 M1640.0,445.2 q7.8,-1.6 11.6,0.7 M1625.7,305.6 q3.9,0.2 3.8,4.5 M1658.0,312.2 q3.5,-0.7 3.1,2.6 M1640.8,377.2 q3.2,3.7 2.5,11.4 M1652.2,388.2 q6.6,-2.8 9.3,-1.6 M1682.2,422.9 q1.8,3.5 -0.5,11.0 M1642.6,341.4 q2.8,0.3 1.6,4.5 M1616.9,270.4 q4.8,-1.7 5.6,0.5 M1638.5,267.3 q4.0,-1.9 4.0,0.3 M1619.9,333.8 q1.5,0.0 -0.9,4.1 M1659.9,287.8 q4.6,-0.5 5.2,3.1 M1640.4,282.3 q-0.6,2.7 -5.3,9.4 M1648.3,359.5 q4.3,-2.1 4.7,-0.3 M1638.7,312.7 q7.3,-1.5 10.6,0.9 M1613.8,459.5 q6.1,-1.8 8.2,0.4 M1654.4,261.8 q0.1,1.7 -3.8,7.3 M1679.3,405.0 q4.5,-0.3 5.1,3.3 M1625.0,421.2 q2.0,2.1 0.0,8.3 M1637.7,303.7 q-0.5,2.6 -5.0,9.2 M1678.5,428.5 q2.5,3.2 1.0,10.5 M1629.7,366.8 q5.3,-2.8 6.7,-1.6 M1614.2,315.8 q2.6,1.0 1.3,5.9 M1686.6,351.7 q-0.8,3.0 -5.5,10.1 M1686.5,334.0 q4.8,-1.3 5.6,1.4 M1627.3,299.7 q0.7,2.3 -2.6,8.6 M1677.6,358.6 q1.8,2.6 -0.4,9.2 M1618.6,397.4 q2.0,3.6 -0.1,11.3 M1670.5,358.3 q1.9,0.7 -0.1,5.4 M1637.9,427.4 q6.7,1.6 9.4,7.1 M1643.3,458.6 q6.9,-1.5 9.7,1.1 M1621.9,288.3 q1.6,3.6 -0.7,11.2 M1623.4,432.9 q3.7,3.7 3.4,11.3 M1639.3,373.4 q4.4,-2.7 4.9,-1.3 M1687.7,395.0 q0.5,1.8 -3.0,7.7 M1645.8,442.6 q7.2,-0.9 10.4,2.2 M1631.6,318.7 q3.3,0.6 2.6,5.3 M1632.2,345.7 q1.2,0.4 -1.6,4.8 M1639.6,354.0 q0.7,2.1 -2.6,8.3 M1644.8,452.4 q4.2,1.3 4.5,6.6 M1652.8,260.0 q5.7,-1.5 7.4,1.0 M1612.3,427.0 q3.8,-0.0 3.6,4.0 M1668.6,375.1 q3.9,0.7 3.9,5.4 M1655.3,423.8 q3.2,0.1 2.4,4.2 M1631.4,315.3 q5.1,2.0 6.2,8.1 M1655.8,418.6 q6.1,1.9 8.2,7.8 M1659.8,364.2 q2.8,2.0 1.7,7.9 M1647.3,370.1 q0.5,1.6 -3.0,7.2 M1666.5,443.6 q7.5,-0.2 10.9,3.7 M1655.6,457.9 q7.4,-1.8 10.7,0.3 M1621.5,350.6 q4.2,-1.4 4.4,1.3 M1617.7,399.3 q0.6,2.9 -2.9,9.9 M1624.0,409.2 q6.6,-1.8 9.3,0.4 M1680.9,463.1 q0.8,0.6 -2.3,5.3 M1643.1,360.3 q1.2,3.9 -1.5,11.8 M1624.6,348.3 q5.5,-0.0 7.1,4.0 M1627.3,324.2 q6.7,-3.2 9.5,-2.4 M1655.2,350.3 q3.8,-1.0 3.6,2.0 M1660.7,365.6 q0.9,-0.0 -2.1,4.0 M1673.5,463.9 q4.3,-1.2 4.6,1.6 M1615.1,422.7 q5.1,-2.0 6.2,0.1 M1644.9,451.0 q7.0,-0.3 10.0,3.3 M1623.7,452.7 q2.8,2.2 1.6,8.4 M1619.0,268.3 q5.6,1.1 7.1,6.3 M1617.6,456.8 q1.8,2.5 -0.5,9.1 M1618.5,439.2 q1.6,0.2 -0.9,4.4 M1647.4,328.6 q0.5,2.0 -2.9,7.9 M1632.9,283.7 q6.0,-0.9 7.9,2.2 M1620.5,290.6 q4.2,-1.6 4.3,0.8 M1636.3,321.3 q6.6,-0.1 9.3,3.9 M1651.0,294.1 q5.3,-2.9 6.6,-1.7 M1631.5,259.3 q4.6,2.2 5.1,8.4 M1626.8,357.6 q7.7,-2.3 11.5,-0.5 M1675.9,348.5 q1.5,1.9 -1.0,7.9 M1642.7,364.4 q-0.2,2.2 -4.4,8.4 M1638.7,434.1 q3.6,2.5 3.3,9.1 M1643.6,330.4 q4.2,-2.0 4.4,0.1 M1617.5,414.6 q5.0,-1.7 6.0,0.6 M1618.6,436.0 q3.4,3.3 2.8,10.6 M1634.0,307.8 q4.2,0.3 4.4,4.6 M1624.3,351.4 q0.7,0.8 -2.6,5.5 M1687.9,373.1 q0.7,0.7 -2.6,5.4 M1636.1,332.3 q3.6,-0.8 3.3,2.3 M1649.0,363.6 q3.7,0.2 3.4,4.4 M1612.4,312.5 q3.9,-0.6 3.7,2.9 M1615.3,260.8 q5.1,-1.2 6.2,1.6 M1657.7,369.2 q3.4,2.8 2.9,9.6 M1667.8,444.1 q5.2,-0.3 6.3,3.3 M1688.8,288.0 q3.6,2.6 3.1,9.3 M1615.4,434.8 q4.0,3.2 4.0,10.4 M1669.2,429.8 q3.5,0.1 2.9,4.2 M1651.3,434.7 q1.4,3.2 -1.2,10.4 M1657.6,447.1 q3.0,2.6 1.9,9.3 M1629.9,262.7 q4.1,-0.6 4.3,2.7 M1620.2,434.9 q3.5,2.0 3.0,7.9 M1660.8,401.7 q5.8,-3.1 7.6,-2.3 M1674.2,416.1 q4.2,1.3 4.4,6.7 M1663.4,270.1 q6.7,-0.5 9.4,3.0 M1617.8,312.8 q6.8,-1.1 9.7,1.9 M1669.7,464.8 q5.2,0.3 6.5,4.6 M1649.4,402.3 q3.9,2.7 3.9,9.4 M1662.1,272.6 q4.5,-1.2 4.9,1.6 M1670.0,321.1 q6.1,-3.1 8.2,-2.3 M1616.7,313.5 q3.0,2.6 2.0,9.2 M1664.7,318.2 q4.8,1.0 5.6,5.9 M1648.4,281.4 q7.5,-1.0 11.0,2.0 M1688.3,456.4 q3.4,-0.5 2.9,3.0 M1676.0,463.2 q5.6,-0.7 7.1,2.6 M1628.4,458.4 q3.3,0.5 2.6,5.1 M1623.1,368.2 q7.8,-1.9 11.6,0.2 M1676.0,364.9 q3.0,3.5 2.0,10.9 M1630.0,448.1 q5.8,-2.9 7.7,-1.9 M1612.3,361.2 q5.5,-0.4 6.9,3.1 M1623.0,329.6 q1.5,1.2 -0.9,6.5 M1612.1,416.7 q7.4,-2.1 10.7,-0.1 M1684.3,408.6 q7.2,0.2 10.3,4.3 M1641.0,340.1 q4.6,3.4 5.3,10.8 M1640.1,347.6 q5.0,-2.6 6.1,-1.1 M1619.9,434.6 q0.9,0.9 -2.3,5.8 M1631.4,312.9 q6.0,-1.4 8.0,1.3 M1641.1,460.6 q1.6,3.5 -0.9,11.0 M1661.2,451.5 q5.0,2.9 6.1,9.8 M1668.1,266.6 q5.5,1.5 7.0,6.9 M1670.7,393.9 q5.1,-2.6 6.2,-1.1 M1684.3,283.2 q5.4,-0.1 6.7,3.9 M1635.2,414.2 q7.6,-0.1 11.2,3.8 M1663.2,320.4 q5.4,0.5 6.8,5.1 M1625.1,290.6 q1.2,0.7 -1.7,5.4 M1650.8,303.1 q-0.8,2.9 -5.6,9.8 M1647.1,285.9 q4.8,-2.2 5.5,-0.5 M1638.7,275.5 q4.8,-1.1 5.6,1.9 M1656.4,445.9 q5.9,1.2 7.7,6.4 M1644.3,368.2 q5.1,-0.3 6.1,3.4 M1616.8,315.4 q7.9,-2.0 11.7,0.0 M1651.3,390.7 q7.3,-0.8 10.6,2.4 M1633.1,309.2 q4.6,0.5 5.2,5.0 M1686.4,437.6 q7.3,-3.3 10.6,-2.7 M1614.5,407.8 q5.7,2.1 7.5,8.3 M1657.8,256.0 q0.8,1.3 -2.5,6.7 M1676.4,439.1 q7.6,-0.3 11.3,3.4 M1620.5,289.0 q2.9,2.0 1.9,8.0 M1685.4,410.5 q2.2,2.6 0.3,9.2 M1647.7,374.0 q2.0,0.2 -0.0,4.3 M1630.1,452.9 q6.2,-0.1 8.3,3.8 M1622.0,309.9 q2.9,2.5 1.8,8.9 M1620.7,271.1 q3.9,1.6 3.7,7.3 M1642.3,303.8 q6.2,-3.2 8.5,-2.4 M1635.5,354.6 q3.9,3.5 3.7,11.1 M1680.9,357.7 q4.8,-1.2 5.6,1.7 M1686.9,406.8 q5.1,-2.8 6.3,-1.6 M1650.9,400.3 q5.5,-0.9 7.0,2.3 M1664.1,454.0 q4.8,-2.6 5.7,-1.3 M1638.4,346.0 q6.7,-1.2 9.3,1.7 M1674.2,414.2 q5.9,-1.2 7.9,1.5 M1687.6,322.7 q7.1,-0.7 10.2,2.7 M1629.3,418.7 q0.7,0.9 -2.6,5.8 M1650.7,296.1 q4.2,-0.1 4.4,3.7 M1663.9,459.0 q4.1,-0.4 4.1,3.1 M1628.6,464.5 q4.5,-2.4 5.1,-0.9 M1616.7,340.2 q0.6,3.4 -2.8,10.8 M1669.2,469.5 q7.1,0.7 10.1,5.4 M1626.5,456.3 q6.9,-3.1 9.7,-2.2 M1663.8,337.0 q5.1,-0.3 6.1,3.3 M1625.2,256.6 q4.7,-0.4 5.3,3.2 M1686.5,282.5 q7.7,-0.8 11.5,2.3 M1639.8,431.8 q5.9,1.6 7.8,7.1 M1615.8,357.3 q0.8,1.3 -2.3,6.6 M1627.1,333.9 q7.4,-3.3 10.9,-2.5 M1644.0,429.7 q7.0,-3.0 9.9,-2.0 M1614.7,269.4 q7.4,-0.2 10.8,3.5 M1670.3,448.3 q5.1,-0.8 6.3,2.3 M1686.7,388.0 q2.5,1.0 0.9,6.0 M1636.7,315.0 q2.1,0.0 0.2,4.0 M1683.5,391.7 q7.6,-3.4 11.2,-2.8 M1630.2,357.7 q-0.4,3.3 -4.7,10.6 M1642.1,309.7 q4.4,0.9 4.7,5.8 M1684.4,295.1 q2.5,3.2 1.0,10.4 M1676.2,421.4 q5.9,0.1 7.8,4.1 M1636.9,333.4 q7.1,-2.6 10.2,-1.1 M1627.4,417.1 q5.0,-2.4 5.9,-0.9 M1614.6,374.3 q0.5,0.9 -3.1,5.9 M1680.9,467.4 q5.0,-2.3 6.1,-0.6 M1619.5,362.7 q5.5,1.4 6.9,6.8 M1630.3,345.2 q3.1,2.3 2.2,8.7 M1670.3,437.3 q6.7,-2.0 9.3,-0.1 M1677.6,318.9 q5.5,0.4 7.1,4.8 M1669.6,298.6 q4.9,-1.1 5.7,1.7 M1624.0,445.2 q5.8,0.0 7.6,4.0 M1642.9,468.4 q5.9,-1.0 7.8,2.0 M1675.1,395.8 q8.0,-2.3 11.9,-0.6 M1649.0,431.3 q0.3,3.1 -3.4,10.2 M1615.1,318.8 q4.4,-1.6 4.9,0.8 M1687.9,380.8 q6.7,1.2 9.5,6.4 M1679.6,352.1 q2.0,1.0 0.0,6.1 M1685.8,278.6 q3.6,2.1 3.3,8.1 M1629.0,334.9 q4.5,-1.5 5.0,1.0 M1631.9,384.3 q6.5,-1.1 9.1,1.7 M1612.9,326.0 q6.7,-1.3 9.3,1.4 M1636.4,299.5 q4.7,2.4 5.5,8.8 M1616.9,277.7 q3.9,1.1 3.7,6.1 M1661.9,275.5 q2.5,0.6 1.1,5.2 M1644.0,316.6 q0.7,1.0 -2.6,5.9 M1636.4,377.2 q4.6,0.2 5.2,4.4 M1679.4,469.3 q5.4,-1.4 6.8,1.2 M1668.8,299.6 q1.4,-0.1 -1.2,3.9 M1645.1,431.6 q1.1,1.5 -1.8,7.0 M1648.0,290.8 q3.1,-0.2 2.1,3.5 M1662.0,450.7 q2.9,0.2 1.7,4.4 M1640.9,364.0 q4.4,-1.0 4.8,1.9 M1652.7,454.1 q3.6,-0.1 3.1,3.7 M1674.8,462.9 q4.8,-2.0 5.6,0.0 M1685.6,464.8 q5.9,-2.7 7.7,-1.3 M1684.2,339.0 q4.1,3.2 4.2,10.4 M1676.3,290.3 q7.0,-0.8 10.0,2.4 M1643.5,437.1 q7.3,-1.3 10.5,1.5 M1629.0,341.5 q5.3,0.4 6.6,4.7 M1621.6,308.9 q0.6,2.7 -2.7,9.4 M1615.2,376.3 q6.9,-3.0 9.8,-2.1 M1677.4,281.2 q4.3,1.7 4.6,7.5 M1660.9,321.5 q3.7,1.3 3.3,6.6 M1645.2,397.0 q4.8,0.6 5.5,5.2 M1613.8,388.4 q5.8,-1.0 7.6,2.1 M1671.6,422.9 q5.8,-1.5 7.6,1.0 M1648.9,278.9 q3.9,-0.3 3.7,3.4 M1619.2,350.6 q6.0,-2.8 7.9,-1.6 M1661.6,273.6 q2.0,2.9 0.0,9.9 M1651.9,267.6 q5.3,0.3 6.6,4.6 M1686.2,285.1 q-0.7,2.7 -5.4,9.4 M1669.1,430.4 q0.7,0.5 -2.6,4.9 M1650.4,460.7 q7.6,-1.5 11.3,1.1 M1673.5,455.1 q3.9,-0.8 3.9,2.3 M1671.0,290.0 q7.2,-0.0 10.5,3.9 M1675.6,286.7 q0.7,1.8 -2.7,7.6 M1628.2,312.3 q5.6,-0.2 7.2,3.6 M1614.9,295.0 q1.0,0.5 -1.9,4.9 M1665.0,447.6 q2.0,0.7 -0.1,5.3 M1621.0,369.6 q5.8,0.4 7.7,4.9 M1680.1,374.8 q0.9,2.2 -2.1,8.4 M1620.2,468.5 q5.6,0.7 7.2,5.4 M1674.2,312.7 q4.8,3.3 5.6,10.5 M1640.1,419.6 q5.7,-1.5 7.5,0.9 M1670.0,266.3 q7.0,-0.4 10.1,3.2 M1661.9,466.6 q3.2,2.2 2.4,8.4 M1636.4,256.4 q4.1,-1.9 4.3,0.2 M1660.1,348.5 q0.9,1.9 -2.2,7.8 M1622.3,304.6 q6.5,-3.1 8.9,-2.3 M1612.2,332.0 q4.1,-0.7 4.1,2.6 M1629.5,380.9 q6.3,-1.2 8.6,1.6 M1660.7,357.6 q1.1,0.4 -1.9,4.7 M1631.0,288.0 q2.8,0.2 1.6,4.5 M1680.0,423.4 q5.4,-0.8 6.8,2.4 M1612.9,394.0 q5.6,0.2 7.3,4.4 M1662.4,351.0 q2.6,3.7 1.3,11.4 M1631.4,449.3 q3.2,-0.2 2.4,3.6 M1643.7,306.9 q2.0,0.2 0.0,4.5 M1613.0,373.9 q7.8,-1.8 11.5,0.5 M1627.6,386.1 q3.3,1.8 2.6,7.6 M1675.4,293.4 q5.0,-0.7 5.9,2.6 M1615.8,446.3 q2.8,3.1 1.6,10.1 M1612.5,436.7 q5.4,1.6 6.8,7.3 M1669.9,352.8 q4.9,-2.1 5.8,-0.3 M1630.1,264.3 q2.2,1.3 0.5,6.7 M1666.2,436.9 q6.6,-0.4 9.1,3.2 M1655.2,349.3 q5.0,2.2 5.9,8.4 M1632.7,393.4 q7.7,-0.7 11.4,2.6 M1680.6,259.3 q4.9,-1.2 5.9,1.6 M1670.0,458.2 q6.4,0.3 8.8,4.6 M1680.7,326.3 q1.1,0.8 -1.8,5.6 M1661.2,404.3 q-0.1,2.1 -4.3,8.3 M1648.6,435.7 q1.1,2.7 -1.8,9.4 M1646.1,411.1 q5.9,-0.2 7.8,3.6 M1628.5,389.2 q1.3,0.2 -1.4,4.4 M1623.3,261.8 q1.1,0.3 -1.7,4.5 M1638.9,286.4 q4.1,-2.4 4.1,-0.8 M1666.0,391.6 q2.5,2.8 1.0,9.5 M1617.1,382.4 q1.7,1.4 -0.6,6.9 M1675.9,446.7 q1.5,0.2 -1.0,4.4 M1683.3,458.1 q4.4,-1.5 4.8,0.9 M1620.7,263.4 q1.6,3.4 -0.8,10.7 M1661.5,432.6 q6.2,-0.3 8.4,3.4 M1619.8,276.9 q6.9,-1.0 9.9,1.9 M1636.9,346.7 q4.0,-1.4 4.0,1.3 M1634.0,409.2 q5.1,-0.4 6.2,3.1 M1687.2,363.8 q4.0,3.0 4.1,10.0 M1614.4,344.4 q2.1,1.7 0.1,7.5 M1639.0,406.8 q6.1,-1.1 8.1,1.8 M1679.3,275.5 q7.2,-1.4 10.5,1.1 M1612.1,299.2 q-0.3,2.5 -4.6,9.0 M1612.3,361.0 q1.8,2.0 -0.3,7.9 M1626.4,361.8 q1.6,1.4 -0.8,6.7 M1632.3,458.0 q5.1,-1.3 6.1,1.3 M1666.6,362.6 q2.8,0.3 1.6,4.6 M1618.3,424.6 q1.9,2.8 -0.2,9.6 M1661.0,332.1 q4.9,0.2 5.8,4.3 M1681.5,274.4 q7.4,-3.3 10.8,-2.6 M1628.1,312.3 q5.5,2.4 6.9,8.8 M1641.6,445.2 q4.0,0.1 4.1,4.2 M1647.8,568.1 q3.6,2.8 3.2,9.5 M1631.4,512.5 q1.6,0.6 -0.8,5.2 M1659.6,566.5 q4.0,-0.2 3.9,3.7 M1669.6,545.3 q3.7,-0.2 3.5,3.6 M1679.7,500.9 q4.5,-0.9 5.0,2.3 M1663.3,579.7 q4.6,-1.8 5.2,0.4 M1622.3,512.5 q6.1,-1.6 8.1,0.7 M1629.5,494.6 q2.7,3.9 1.4,11.7 M1609.2,595.1 q4.0,-0.6 3.9,2.8 M1688.5,573.3 q5.6,1.3 7.3,6.7 M1617.7,552.9 q4.4,-1.5 4.8,0.9 M1635.0,474.4 q1.9,1.6 -0.2,7.2 M1662.4,535.1 q5.1,1.3 6.2,6.6 M1612.8,548.5 q2.3,1.6 0.7,7.2 M1681.7,525.9 q2.3,2.3 0.6,8.6 M1637.9,499.7 q0.8,2.7 -2.3,9.5 M1669.7,561.0 q3.3,3.3 2.6,10.5 M1657.7,529.0 q3.2,1.0 2.3,6.1 M1608.8,524.5 q2.8,3.1 1.6,10.1 M1656.7,502.5 q4.6,0.6 5.2,5.3 M1655.9,523.2 q0.3,2.4 -3.3,8.8 M1616.5,555.1 q6.1,1.0 8.2,6.0 M1644.1,596.7 q3.2,-0.2 2.3,3.6 M1614.5,571.6 q5.4,2.7 6.7,9.3 M1609.1,544.7 q2.6,2.1 1.2,8.2 M1646.1,553.1 q5.1,2.3 6.2,8.7 M1636.9,593.2 q2.6,0.8 1.3,5.5 M1635.3,569.2 q0.8,0.2 -2.4,4.4 M1632.0,477.4 q4.4,-0.1 4.9,3.8 M1601.2,524.4 q2.7,1.6 1.4,7.2 M1631.7,504.5 q2.3,0.9 0.5,5.8 M1684.6,538.5 q1.8,0.9 -0.3,5.7 M1635.3,497.6 q2.0,0.5 0.0,5.0 M1672.9,552.5 q3.9,1.4 3.9,6.7 M1620.3,595.3 q3.1,1.2 2.3,6.4 M1673.7,576.1 q5.6,-0.5 7.1,3.1 M1649.3,486.3 q6.5,0.8 9.1,5.6 M1676.6,504.8 q5.3,-0.9 6.7,2.1 M1638.3,494.2 q2.3,-0.0 0.6,4.0 M1625.3,501.8 q4.1,0.4 4.2,4.8 M1638.6,552.8 q5.9,0.5 7.8,5.0 M1683.6,581.1 q1.7,0.2 -0.5,4.4 M1681.5,571.9 q1.7,0.5 -0.6,5.1 M1657.0,471.9 q1.2,-0.1 -1.6,3.7 M1659.0,502.5 q4.4,-1.9 4.8,0.2 M1621.0,570.9 q5.4,-1.8 6.8,0.4 M1681.4,572.9 q1.3,0.6 -1.4,5.2 M1654.8,571.6 q0.7,2.5 -2.5,9.0 M1670.9,579.0 q2.6,0.7 1.2,5.5 M1647.8,566.4 q1.1,1.6 -1.8,7.3 M1650.0,504.4 q4.9,-1.9 5.9,0.2 M1644.4,477.6 q5.9,-1.8 7.7,0.4 M1644.2,534.8 q1.2,2.1 -1.7,8.2 M1600.6,579.3 q3.9,1.4 3.9,6.7 M1659.9,579.3 q4.7,0.3 5.3,4.5 M1686.5,479.8 q3.5,2.3 3.1,8.6 M1602.6,549.3 q0.3,2.4 -3.4,8.8 M1629.7,597.6 q4.6,1.1 5.3,6.1 M1680.8,474.4 q3.8,2.5 3.5,9.1 M1630.5,582.0 q4.3,0.6 4.6,5.2 M1647.3,570.2 q4.1,-0.1 4.2,3.9 M1638.0,542.0 q6.9,0.1 9.8,4.2 M1674.5,522.5 q5.8,-0.6 7.5,2.8 M1645.6,596.7 q1.9,2.6 -0.3,9.2 M1629.8,511.2 q3.4,0.9 2.9,5.7 M1657.1,571.9 q2.3,0.1 0.6,4.3 M1679.7,540.9 q4.0,-1.1 4.0,1.8 M1600.6,494.7 q4.3,3.2 4.5,10.4 M1659.2,572.6 q4.2,3.2 4.4,10.4 M1655.5,551.5 q4.0,2.3 4.1,8.7 M1661.3,497.6 q5.3,1.3 6.5,6.7 M1668.6,483.2 q4.7,-2.6 5.3,-1.1 M1669.7,588.8 q5.9,0.6 7.7,5.1 M1674.0,572.3 q6.0,-0.7 8.1,2.7 M1627.2,524.8 q4.4,0.2 4.9,4.4 M1657.8,591.4 q3.1,-0.1 2.2,3.9 M1603.5,485.5 q4.5,2.6 4.9,9.2 M1682.7,528.0 q3.7,-0.8 3.3,2.4 M1653.3,591.9 q5.9,2.4 7.9,8.8 M1637.1,483.3 q6.5,-1.0 9.0,1.9 M1613.7,472.0 q2.5,-0.0 0.9,3.9 M1611.0,595.6 q1.5,0.3 -1.0,4.6 M1611.6,472.3 q6.7,-0.6 9.4,2.7 M1666.0,494.4 q2.0,0.2 0.1,4.4 M1664.2,581.2 q6.9,-2.5 9.8,-1.0 M1656.6,562.2 q0.6,1.6 -2.8,7.2 M1622.9,595.4 q6.7,-3.3 9.4,-2.6 M1601.3,554.6 q7.2,-2.6 10.5,-1.1 M1628.0,564.8 q1.5,0.6 -1.0,5.2 M1643.8,477.8 q3.6,1.1 3.3,6.1 M1621.5,721.8 q1.9,0.6 -0.2,5.2 M1612.3,716.1 q5.4,0.9 6.9,5.8 M1615.1,741.5 q1.9,3.8 -0.1,11.6 M1637.2,652.6 q1.0,0.0 -2.0,4.0 M1653.8,748.9 q3.3,1.0 2.7,6.1 M1687.2,749.6 q6.0,-0.1 8.0,3.8 M1620.3,759.9 q2.8,1.4 1.6,6.8 M1641.4,761.3 q6.9,-0.1 9.7,3.9 M1568.2,647.3 q3.6,1.3 3.3,6.6 M1667.6,759.7 q1.7,0.2 -0.6,4.3 M1667.0,756.1 q6.0,-0.5 8.0,3.0 M1671.8,745.3 q0.5,2.5 -3.0,9.0 M1610.3,615.3 q1.8,2.2 -0.4,8.4 M1592.5,735.0 q7.5,-0.5 11.1,3.0 M1642.0,722.0 q5.8,-1.2 7.6,1.5 M1599.1,735.2 q5.6,1.7 7.2,7.4 M1578.7,745.2 q6.9,-0.7 9.8,2.6 M1638.7,761.4 q5.2,2.5 6.4,9.0 M1626.1,706.1 q4.7,-1.6 5.4,0.9 M1590.0,726.2 q3.7,1.0 3.4,6.0 M1617.1,693.1 q4.5,-2.5 5.1,-1.0 M1689.7,667.3 q2.8,0.3 1.7,4.6 M1664.1,628.1 q5.8,0.2 7.6,4.4 M1631.4,603.7 q1.0,-0.1 -2.1,3.7 M1673.7,687.5 q6.0,-0.6 8.1,2.7 M1663.1,676.7 q2.2,3.8 0.3,11.6 M1667.9,773.4 q5.0,-2.6 5.9,-1.3 M1592.5,632.5 q4.3,-2.4 4.6,-0.8 M1636.0,756.7 q0.5,1.5 -3.0,7.1 M1679.0,611.6 q5.5,0.7 7.0,5.3 M1582.6,772.7 q3.5,0.6 3.0,5.3 M1646.2,772.2 q5.7,0.8 7.5,5.6 M1622.7,628.8 q-0.9,3.1 -5.7,10.2 M1595.1,607.0 q4.6,-0.4 5.2,3.1 M1678.1,762.8 q7.3,-3.0 10.5,-2.0 M1663.9,727.7 q-0.2,2.0 -4.4,8.1 M1574.8,626.1 q0.1,2.7 -3.8,9.3 M1650.6,653.8 q2.2,2.4 0.5,8.7 M1580.9,658.3 q5.0,-2.0 6.1,-0.0 M1626.7,630.3 q5.0,-1.9 5.9,0.3 M1650.7,602.3 q6.8,-1.2 9.6,1.6 M1572.4,767.0 q1.0,0.7 -2.1,5.4 M1673.7,760.0 q3.8,-0.2 3.7,3.6 M1579.8,767.2 q3.9,3.0 3.8,10.0 M1623.2,661.2 q5.5,2.0 7.0,7.9 M1644.6,625.7 q4.8,-2.5 5.7,-0.9 M1655.1,699.6 q1.4,0.5 -1.1,5.0 M1600.5,674.1 q4.5,-1.1 4.9,1.8 M1670.4,660.2 q3.7,0.1 3.4,4.1 M1606.8,762.6 q0.9,0.2 -2.3,4.4 M1574.9,761.1 q6.6,-1.0 9.1,1.9 M1626.2,651.5 q5.0,-1.4 6.0,1.1 M1612.4,778.4 q-0.1,3.6 -4.1,11.3 M1579.9,652.1 q7.5,-2.9 11.0,-1.8 M1656.6,652.8 q7.7,-3.5 11.4,-3.1 M1666.5,661.4 q4.4,-2.7 4.9,-1.5 M1669.5,694.8 q4.0,-0.1 4.0,3.7 M1679.3,639.3 q6.3,-1.9 8.6,0.3 M1590.0,738.7 q6.8,-1.2 9.5,1.7 M1577.7,615.7 q4.8,1.4 5.6,6.9 M1601.4,637.1 q2.8,2.4 1.5,8.8 M1667.0,704.9 q4.8,-2.4 5.6,-0.8 M1657.4,673.5 q6.8,-2.8 9.6,-1.6 M1666.9,660.3 q0.9,3.3 -2.2,10.5 M1628.1,602.8 q5.7,2.2 7.5,8.4 M1674.4,647.9 q1.7,0.7 -0.7,5.4 M1612.8,629.4 q3.5,1.1 3.0,6.3 M1568.6,693.6 q4.2,1.0 4.5,6.1 M1582.7,728.6 q0.9,3.2 -2.2,10.3 M1607.2,728.0 q2.2,1.5 0.5,7.0 M1575.5,757.1 q5.7,2.5 7.3,9.0 M1630.6,695.5 q6.0,-3.0 8.0,-2.1 M1686.0,640.3 q4.7,-2.1 5.5,-0.3 M1598.6,747.1 q4.1,-2.1 4.2,-0.3 M1653.3,635.1 q2.9,-0.1 1.7,3.8 M1638.3,694.1 q6.8,-2.3 9.6,-0.5 M1674.1,729.1 q4.2,-2.0 4.4,-0.0 M1628.2,690.1 q5.1,-2.0 6.2,-0.0 M1617.5,624.7 q1.2,2.3 -1.7,8.6 M1586.0,703.1 q7.0,-1.5 9.9,0.9 M1668.8,768.8 q4.7,0.3 5.4,4.6 M1670.4,694.6 q0.6,1.3 -2.7,6.6 M1662.8,660.9 q4.6,-0.6 5.2,2.9 M1621.1,776.6 q0.4,3.0 -3.3,9.9 M1667.4,752.6 q3.3,-0.2 2.6,3.6 M1684.9,768.2 q4.3,-0.0 4.5,3.9 M1645.2,665.6 q6.1,-2.5 8.2,-1.1 M1620.8,690.9 q4.1,-1.9 4.2,0.1 M1686.3,739.8 q4.0,3.4 4.0,10.8 M1666.7,759.2 q7.4,-3.2 10.8,-2.4 M1646.3,647.8 q6.4,-0.4 8.8,3.3 M1634.2,766.4 q6.3,-0.7 8.6,2.7 M1631.5,678.1 q7.4,0.2 10.7,4.4 M1605.3,716.6 q3.1,0.2 2.1,4.5 M1684.6,692.5 q4.1,0.2 4.2,4.5 M1633.1,626.7 q4.5,-2.0 5.0,0.1 M1603.8,673.2 q5.0,-1.1 6.1,1.8 M1578.7,698.3 q4.1,2.9 4.2,9.8 M1637.6,717.1 q2.5,0.8 0.9,5.5 M1624.2,698.6 q5.0,1.3 6.0,6.5 M1605.9,643.6 q3.7,0.3 3.5,4.6 M1614.7,705.4 q3.7,-0.9 3.5,2.1 M1673.1,642.9 q4.7,1.3 5.4,6.5 M1602.7,777.8 q2.1,1.2 0.1,6.4 M1587.3,612.0 q6.0,1.8 8.0,7.5 M1575.6,669.8 q2.4,1.7 0.8,7.5 M1581.3,640.5 q2.6,3.8 1.1,11.6 M1586.9,660.7 q2.8,1.3 1.7,6.6 M1643.2,753.0 q5.1,2.3 6.2,8.6 M1658.1,733.8 q5.4,1.8 6.7,7.5 M1663.8,727.5 q7.7,-2.0 11.3,0.1 M1674.2,600.8 q4.3,2.5 4.5,9.1 M1628.7,773.3 q5.3,0.8 6.5,5.5 M1663.6,757.1 q5.6,0.5 7.3,5.1 M1623.2,682.4 q6.5,-0.1 9.0,3.8 M1615.7,700.0 q5.1,-0.4 6.3,3.2 M1664.0,752.9 q4.9,0.8 5.8,5.5 M1590.5,654.7 q3.2,0.3 2.4,4.6 M1639.0,615.8 q7.0,0.6 10.1,5.2 M1670.9,750.9 q7.7,-0.9 11.5,2.2 M1620.0,763.9 q4.0,-2.4 4.0,-0.8 M1636.9,689.5 q2.1,3.7 0.2,11.4 M1633.7,779.7 q4.4,1.3 4.8,6.6 M1651.6,670.1 q3.5,1.1 2.9,6.2 M1610.8,770.6 q4.7,1.9 5.4,7.7 M1580.1,667.4 q3.8,1.1 3.6,6.2 M1638.0,758.4 q5.8,2.5 7.6,8.9 M1621.7,712.4 q7.2,1.0 10.4,6.0 M1632.7,746.9 q4.4,-0.8 4.8,2.4 M1687.4,748.7 q6.0,-2.1 8.1,-0.3 M1677.1,724.2 q-0.6,2.6 -5.1,9.2 M1676.4,675.8 q4.4,-1.0 4.8,2.0 M1630.4,690.9 q4.7,-1.6 5.5,0.8 M1644.9,708.6 q0.3,1.0 -3.4,5.9 M1645.7,607.6 q1.9,1.6 -0.1,7.3 M1605.4,724.3 q3.8,-1.2 3.7,1.7 M1670.7,705.5 q6.6,-1.2 9.2,1.6 M1628.7,699.6 q3.0,0.9 1.9,5.8 M1632.8,779.5 q5.3,0.7 6.6,5.4 M1582.8,628.2 q7.0,-2.2 10.1,-0.4 M1580.2,630.7 q1.6,2.1 -0.9,8.1 M1642.8,745.2 q4.2,-2.6 4.3,-1.2 M1662.0,658.1 q6.1,0.5 8.3,5.1 M1588.7,648.0 q1.3,0.3 -1.4,4.6 M1639.0,662.8 q5.1,0.2 6.2,4.4 M1574.7,760.3 q0.2,1.9 -3.6,7.9 M1621.6,711.6 q4.9,-2.6 5.9,-1.2 M1681.6,753.8 q1.1,1.1 -1.8,6.3 M1667.5,654.7 q0.1,2.0 -3.7,8.0 M1628.5,770.9 q4.4,-0.2 4.8,3.5 M1655.7,639.9 q1.3,1.2 -1.5,6.3 M1627.1,742.7 q5.0,-1.7 5.9,0.7 M1611.7,633.6 q7.4,0.3 10.9,4.6 M1636.5,620.7 q5.4,0.4 6.7,4.8 M1617.2,611.8 q1.7,0.5 -0.6,5.0 M1610.9,644.1 q4.6,-1.0 5.1,2.1 M1596.9,606.3 q6.0,0.3 8.1,4.6 M1587.0,727.1 q4.2,-1.2 4.5,1.6 M1669.9,623.0 q1.5,1.7 -1.0,7.5 M1666.2,628.7 q2.5,1.4 0.9,6.8 M1614.0,772.5 q0.9,0.6 -2.3,5.2 M1629.6,640.9 q5.8,-1.9 7.6,0.1 M1654.2,646.9 q4.5,3.0 5.0,10.0 M1612.9,644.3 q6.3,-1.1 8.7,1.8 M1674.4,622.1 q4.2,1.4 4.4,6.8 M1601.0,738.9 q3.0,1.4 2.0,6.8 M1637.3,655.9 q5.5,-2.3 7.1,-0.7 M1589.6,753.2 q2.9,1.2 1.8,6.3 M1581.3,701.2 q4.1,0.7 4.3,5.4 M1604.2,611.9 q5.1,-1.2 6.3,1.6 M1583.4,729.0 q4.5,-0.1 4.9,3.9 M1678.9,739.5 q0.9,3.4 -2.2,10.8 M1584.1,649.8 q2.5,0.1 1.0,4.1 M1649.0,663.3 q3.0,1.5 2.1,7.0 M1653.3,644.7 q6.6,0.8 9.2,5.6 M1644.7,632.7 q1.2,0.3 -1.5,4.7 M1657.6,728.3 q4.1,-2.4 4.2,-0.9 M1587.8,635.7 q4.6,-0.1 5.3,3.7 M1572.8,656.0 q6.5,-1.4 9.0,1.2 M1670.4,702.6 q6.6,-0.5 9.3,3.0 M1621.1,723.2 q5.2,-3.0 6.5,-2.0 M1669.8,739.8 q5.1,-2.6 6.2,-1.2 M1672.2,709.3 q4.1,-1.4 4.2,1.2 M1581.6,742.5 q1.1,0.7 -1.8,5.4 M1659.4,615.5 q5.8,0.9 7.6,5.7 M1659.2,749.2 q5.1,-2.3 6.2,-0.5 M1683.5,676.3 q3.2,3.6 2.4,11.2 M1658.1,749.4 q5.2,1.2 6.4,6.4 M1574.6,725.7 q4.2,1.0 4.4,5.9 M1681.2,623.0 q7.0,-3.0 9.9,-2.0 M1653.7,745.0 q3.6,0.6 3.2,5.2 M1686.3,714.8 q6.0,-0.8 8.0,2.5 M1575.2,664.4 q5.6,-1.3 7.2,1.3 M1605.9,624.6 q3.3,2.7 2.5,9.3 M1597.0,643.5 q4.9,0.8 5.8,5.6 M1682.2,663.3 q1.2,1.1 -1.6,6.2 M1585.3,701.4 q1.7,1.3 -0.6,6.6 M1634.9,736.9 q2.7,0.6 1.4,5.2 M1641.0,683.0 q1.4,3.0 -1.3,10.1 M1582.0,652.1 q5.4,-1.3 6.8,1.3 M1624.2,802.5 q2.5,0.7 1.0,5.5 M1651.4,789.0 q4.2,0.4 4.5,4.8 M1645.4,793.4 q4.2,-2.6 4.4,-1.2 M1689.4,840.0 q2.3,0.3 0.7,4.6 M1688.6,825.1 q3.6,-0.1 3.1,3.7 M1650.4,795.2 q6.0,-3.2 8.0,-2.3 M1684.4,831.6 q0.4,2.2 -3.3,8.4 M1665.7,800.1 q5.0,-1.9 6.0,0.2 M1621.9,842.0 q6.9,0.1 9.8,4.3 M1633.0,831.0 q0.1,3.1 -3.7,10.1 M1631.8,842.8 q2.5,3.3 0.9,10.6 M1642.9,794.8 q6.7,0.4 9.5,4.8 M1645.8,824.1 q1.6,1.5 -0.9,6.9 M1636.8,783.3 q3.5,2.0 3.0,8.0 M1677.4,836.4 q-0.2,3.2 -4.3,10.4 M1654.6,820.0 q4.4,-0.9 4.8,2.1 M1660.7,786.4 q6.7,-1.6 9.5,0.9 M1651.0,857.6 q4.3,-2.5 4.6,-1.0 M1650.8,795.3 q6.7,-3.4 9.4,-2.8 M1678.9,848.4 q5.9,1.4 7.7,6.8 M1639.8,832.9 q5.1,0.6 6.2,5.3 M1643.7,815.1 q1.5,2.6 -1.0,9.3 M1683.3,793.2 q4.3,0.2 4.6,4.4 M1659.4,807.8 q4.8,-2.3 5.5,-0.5 M1642.7,816.8 q0.2,3.6 -3.6,11.2 M1680.6,857.9 q4.2,3.4 4.4,10.8 M1676.8,784.8 q3.9,2.3 3.7,8.6 M1640.8,825.7 q5.8,2.4 7.6,8.8 M1665.3,803.9 q1.2,1.3 -1.7,6.5 M1621.9,795.1 q5.4,1.3 6.7,6.6 M1626.0,832.8 q3.6,1.1 3.2,6.2 M1649.1,822.4 q5.4,0.6 6.8,5.2 M1628.0,794.4 q4.9,2.7 5.9,9.4 M1627.9,849.0 q5.0,-2.2 6.0,-0.4 M1657.2,800.1 q4.0,1.4 4.1,6.8 M1635.9,825.8 q3.5,-0.0 2.9,3.9 M1661.2,786.4 q5.6,-2.4 7.2,-0.9 M1650.8,849.1 q2.7,2.2 1.3,8.3 M1673.0,789.2 q2.8,3.9 1.7,11.8 M1627.1,846.4 q5.5,-1.6 7.1,0.8 M1687.2,825.0 q7.1,-1.9 10.2,0.3 M1674.3,784.6 q4.4,-0.4 4.9,3.3 M1621.1,827.5 q4.6,-0.8 5.2,2.3 M1669.5,814.1 q4.1,3.2 4.1,10.3 M1681.0,825.0 q0.8,3.5 -2.5,11.1 M1631.8,839.6 q2.1,1.4 0.3,6.7 M1667.6,846.1 q4.1,-0.6 4.1,2.8 M1671.6,855.8 q6.8,-2.9 9.6,-1.9 M1662.3,788.0 q1.8,2.2 -0.5,8.4 M1627.9,854.0 q6.5,-0.6 9.0,2.9 M1595.6,296.8 q4.5,2.8 4.9,9.5 M1591.2,271.3 q1.9,0.4 -0.2,4.9 M1595.2,303.3 q2.7,1.1 1.4,6.2 M1605.9,278.7 q5.0,2.6 6.0,9.2 M1622.9,318.5 q7.6,-3.5 11.2,-3.1 M1603.8,279.1 q1.1,1.9 -1.8,7.8 M1629.0,272.1 q1.7,0.7 -0.5,5.4 M1622.4,293.6 q5.9,-1.7 7.8,0.6 M1631.5,293.6 q4.2,3.0 4.3,10.1 M1589.2,289.8 q1.2,0.8 -1.6,5.5 M1617.4,272.6 q4.3,-0.6 4.5,2.9 M1610.7,304.6 q5.0,-0.1 6.1,3.7 M1585.3,304.7 q5.2,-2.8 6.5,-1.7 M1610.3,329.2 q4.2,-1.9 4.4,0.2 M1621.9,286.4 q3.9,0.4 3.8,4.8 M1599.4,304.1 q0.3,1.7 -3.4,7.5 M1639.6,272.0 q2.1,2.2 0.2,8.5 M1633.0,316.5 q3.5,2.3 3.1,8.5 M1605.0,286.9 q0.8,3.1 -2.3,10.1 M1636.6,310.9 q2.1,1.2 0.2,6.4 M1625.7,300.5 q5.9,0.3 7.8,4.7 M1615.3,294.4 q4.0,-0.9 3.9,2.2 M1602.8,329.3 q5.3,0.2 6.6,4.3 M1598.4,284.1 q5.4,-1.9 6.8,0.2 M1585.4,322.3 q4.7,0.7 5.5,5.3" fill="none" stroke="#a6d2e2" stroke-width="1.3" opacity="0.75"/>
<g fill="none" stroke="#a9cf9a" stroke-width="1.6" opacity="0.9">
<path d="M1296.6,682.8 L1305.6,659.4 L1330.8,650.4 L1356.0,632.4 L1392.0,623.4 L1406.4,641.4 L1419.0,672.0 L1440.6,664.8 L1456.8,682.8 L1470.0,682.8"/>
<path d="M1455.0,686.4 L1465.8,711.6 L1453.3,736.8 L1428.0,744.0 L1370.4,754.8 L1334.4,744.0 L1327.2,733.2 L1318.2,735.0 L1305.6,715.2 L1296.6,682.8"/>
<path d="M1305.0,715.0 L1420.0,674.0" stroke-width="2.2"/>
<path d="M1337.0,717.0 L1360.0,716.0 L1360.0,743.0 L1338.0,743.0Z"/>
<path d="M1403.0,545.0 L1430.0,545.0 L1430.0,580.0 L1415.0,590.0"/>
<path d="M1375.0,700.0 L1395.0,735.0 L1380.0,760.0"/>
</g>
<path d="M1230.0,639.0 C1235.3,642.7 1253.7,651.8 1262.0,661.0 C1270.3,670.2 1273.3,685.0 1280.0,694.0 C1286.7,703.0 1295.3,707.8 1302.0,715.0 C1308.7,722.2 1308.0,730.3 1320.0,737.0 C1332.0,743.7 1356.0,753.5 1374.0,755.0 C1392.0,756.5 1412.0,750.8 1428.0,746.0 C1444.0,741.2 1463.0,729.3 1470.0,726.0" fill="none" stroke="#c9c3c3" stroke-width="1.2" stroke-linecap="round" stroke-linejoin="round" opacity="1.0"/>
<path d="M1230.0,690.0 C1241.0,694.2 1272.7,704.2 1296.0,715.0 C1319.3,725.8 1357.7,748.3 1370.0,755.0" fill="none" stroke="#c9c3c3" stroke-width="1.2" stroke-linecap="round" stroke-linejoin="round" opacity="1.0"/>
<path d="M1273.0,674.0 L1284.0,694.0" fill="none" stroke="#c9c3c3" stroke-width="1.2" stroke-linecap="round" stroke-linejoin="round" opacity="1.0"/>
<path d="M1164.0,733.0 C1174.8,735.5 1209.7,743.5 1229.0,748.0 C1248.3,752.5 1271.5,758.0 1280.0,760.0" fill="none" stroke="#c9c3c3" stroke-width="1.2" stroke-linecap="round" stroke-linejoin="round" opacity="1.0"/>
<path d="M1290.0,790.0 C1308.3,791.0 1370.0,796.0 1400.0,796.0 C1430.0,796.0 1458.3,791.0 1470.0,790.0" fill="none" stroke="#c9c3c3" stroke-width="1.2" stroke-linecap="round" stroke-linejoin="round" opacity="1.0"/>
<path d="M1550.0,687.0 C1561.7,690.2 1596.7,700.5 1620.0,706.0 C1643.3,711.5 1678.3,717.7 1690.0,720.0" fill="none" stroke="#c9c3c3" stroke-width="1.2" stroke-linecap="round" stroke-linejoin="round" opacity="1.0"/>
<path d="M1440.0,544.0 C1446.7,540.0 1470.0,530.7 1480.0,520.0 C1490.0,509.3 1492.0,490.7 1500.0,480.0 C1508.0,469.3 1518.0,458.7 1528.0,456.0 C1538.0,453.3 1549.7,463.3 1560.0,464.0 C1570.3,464.7 1581.3,459.7 1590.0,460.0 C1598.7,460.3 1606.3,462.7 1612.0,466.0 C1617.7,469.3 1621.7,473.0 1624.0,480.0 C1626.3,487.0 1626.7,498.0 1626.0,508.0 C1625.3,518.0 1621.0,526.3 1620.0,540.0 C1619.0,553.7 1620.0,581.7 1620.0,590.0" fill="none" stroke="#c9c3c3" stroke-width="1.2" stroke-linecap="round" stroke-linejoin="round" opacity="1.0"/>
<path d="M1110.0,740.0 C1111.3,746.7 1117.7,766.7 1118.0,780.0 C1118.3,793.3 1113.0,813.3 1112.0,820.0" fill="none" stroke="#c9c3c3" stroke-width="1.2" stroke-linecap="round" stroke-linejoin="round" opacity="1.0"/>
<path d="M1250.9,624.8 C1255.8,618.7 1270.3,600.3 1280.3,588.3 C1290.3,576.3 1300.5,564.6 1310.8,552.8 C1321.0,541.0 1331.6,529.3 1341.9,517.3 C1352.1,505.3 1362.4,492.8 1372.5,480.9 C1382.6,468.9 1397.7,451.3 1402.7,445.3" fill="none" stroke="#f3cf96" stroke-width="1.1" stroke-linecap="round" stroke-linejoin="round" opacity="0.95"/>
<path d="M1262.5,622.0 C1267.3,616.7 1282.2,601.0 1291.7,589.9 C1301.3,578.9 1310.2,567.1 1319.6,555.8 C1329.0,544.5 1338.7,533.6 1348.0,522.3 C1357.4,511.0 1366.0,499.2 1375.6,487.8 C1385.2,476.4 1400.6,459.4 1405.6,453.7" fill="none" stroke="#f2b48f" stroke-width="1.3" stroke-linecap="round" stroke-linejoin="round" opacity="0.95"/>
<path d="M1284.9,614.1 C1288.9,609.3 1300.8,595.1 1309.1,585.5 C1317.4,575.8 1326.4,566.0 1334.6,556.3 C1342.8,546.6 1350.3,536.6 1358.4,527.1 C1366.6,517.6 1375.1,509.1 1383.3,499.4 C1391.5,489.7 1403.7,474.0 1407.8,468.9" fill="none" stroke="#f3cf96" stroke-width="1.1" stroke-linecap="round" stroke-linejoin="round" opacity="0.95"/>
<path d="M1301.4,616.0 C1305.0,611.4 1315.7,596.9 1323.0,588.2 C1330.3,579.5 1338.1,572.4 1345.3,563.8 C1352.5,555.1 1359.2,545.0 1366.2,536.3 C1373.3,527.5 1380.3,519.5 1387.8,511.0 C1395.3,502.5 1407.2,489.5 1411.0,485.2" fill="none" stroke="#f2b48f" stroke-width="1.2" stroke-linecap="round" stroke-linejoin="round" opacity="0.95"/>
<path d="M1325.4,608.2 C1328.2,604.8 1336.3,594.9 1342.2,587.8 C1348.1,580.8 1354.7,573.0 1360.9,565.7 C1367.0,558.4 1373.1,551.3 1378.9,544.1 C1384.7,537.0 1389.9,529.9 1395.7,522.8 C1401.5,515.8 1410.7,505.3 1413.7,501.8" fill="none" stroke="#f3cf96" stroke-width="1.1" stroke-linecap="round" stroke-linejoin="round" opacity="0.95"/>
<path d="M1341.4,610.1 C1344.0,607.0 1352.1,597.6 1357.3,591.3 C1362.5,585.0 1367.2,578.4 1372.5,572.4 C1377.7,566.4 1383.5,561.2 1388.9,555.1 C1394.2,549.0 1399.4,541.8 1404.4,535.7 C1409.4,529.6 1416.6,521.5 1419.1,518.7" fill="none" stroke="#f2b48f" stroke-width="1.2" stroke-linecap="round" stroke-linejoin="round" opacity="0.95"/>
<path d="M1366.5,604.3 C1368.1,602.3 1372.8,596.2 1376.4,592.1 C1380.0,588.0 1384.3,583.8 1387.9,579.8 C1391.6,575.8 1395.0,572.1 1398.3,568.2 C1401.7,564.3 1404.7,560.3 1408.1,556.3 C1411.4,552.3 1416.7,546.2 1418.4,544.1" fill="none" stroke="#f3cf96" stroke-width="1.0" stroke-linecap="round" stroke-linejoin="round" opacity="0.95"/>
<path d="M1387.2,608.7 C1388.6,607.1 1392.6,602.3 1395.2,599.3 C1397.8,596.4 1400.3,594.2 1402.9,591.2 C1405.5,588.1 1408.1,584.1 1410.7,581.1 C1413.3,578.1 1416.0,576.3 1418.4,573.2 C1420.9,570.1 1424.3,564.4 1425.5,562.6" fill="none" stroke="#f3cf96" stroke-width="1.0" stroke-linecap="round" stroke-linejoin="round" opacity="0.95"/>
<path d="M1255.7,616.1 C1260.7,620.1 1274.4,630.7 1285.6,640.1 C1296.8,649.5 1316.7,667.1 1322.9,672.5" fill="none" stroke="#f2b48f" stroke-width="1.0" stroke-linecap="round" stroke-linejoin="round" opacity="0.9"/>
<path d="M1262.0,608.7 C1266.6,612.2 1280.5,622.0 1289.7,629.7 C1298.9,637.5 1312.6,650.8 1317.2,655.0" fill="none" stroke="#f3cf96" stroke-width="1.0" stroke-linecap="round" stroke-linejoin="round" opacity="0.9"/>
<path d="M1270.4,598.7 C1273.5,600.6 1282.8,605.3 1289.0,610.5 C1295.2,615.7 1304.5,626.7 1307.6,629.9" fill="none" stroke="#f2b48f" stroke-width="1.0" stroke-linecap="round" stroke-linejoin="round" opacity="0.9"/>
<path d="M1273.1,595.4 C1275.2,597.5 1280.0,603.4 1285.5,608.1 C1291.1,612.7 1302.9,620.8 1306.3,623.3" fill="none" stroke="#f3cf96" stroke-width="1.0" stroke-linecap="round" stroke-linejoin="round" opacity="0.9"/>
<path d="M1281.6,585.3 C1284.7,587.5 1294.4,593.1 1300.3,598.0 C1306.2,603.0 1314.1,612.1 1316.8,614.9" fill="none" stroke="#f2b48f" stroke-width="1.0" stroke-linecap="round" stroke-linejoin="round" opacity="0.9"/>
<path d="M1286.4,579.5 C1289.3,582.2 1298.0,590.6 1303.9,595.5 C1309.7,600.4 1318.5,606.7 1321.5,609.0" fill="none" stroke="#f3cf96" stroke-width="1.0" stroke-linecap="round" stroke-linejoin="round" opacity="0.9"/>
<path d="M1292.9,571.8 C1295.3,573.4 1302.6,577.1 1307.4,581.1 C1312.2,585.1 1319.3,593.5 1321.7,596.0" fill="none" stroke="#f2b48f" stroke-width="1.0" stroke-linecap="round" stroke-linejoin="round" opacity="0.9"/>
<path d="M1302.5,560.4 C1306.4,563.4 1318.0,571.8 1326.1,578.6 C1334.2,585.4 1346.9,597.4 1351.1,601.2" fill="none" stroke="#f3cf96" stroke-width="1.0" stroke-linecap="round" stroke-linejoin="round" opacity="0.9"/>
<path d="M1308.2,553.6 C1311.7,557.0 1321.3,567.8 1329.1,574.4 C1337.0,581.0 1350.8,589.9 1355.2,593.0" fill="none" stroke="#f2b48f" stroke-width="1.0" stroke-linecap="round" stroke-linejoin="round" opacity="0.9"/>
<path d="M1312.0,549.1 C1316.2,553.1 1327.3,565.0 1337.1,573.2 C1346.8,581.4 1364.9,594.0 1370.5,598.2" fill="none" stroke="#f3cf96" stroke-width="1.0" stroke-linecap="round" stroke-linejoin="round" opacity="0.9"/>
<path d="M1319.6,540.1 C1324.2,544.4 1336.7,557.1 1347.4,566.0 C1358.0,575.0 1377.5,589.2 1383.5,593.8" fill="none" stroke="#f2b48f" stroke-width="1.0" stroke-linecap="round" stroke-linejoin="round" opacity="0.9"/>
<path d="M1326.0,532.4 C1331.7,536.9 1349.3,550.4 1360.3,559.7 C1371.4,569.0 1387.0,583.3 1392.3,588.0" fill="none" stroke="#f3cf96" stroke-width="1.0" stroke-linecap="round" stroke-linejoin="round" opacity="0.9"/>
<path d="M1331.7,525.6 C1334.4,528.0 1341.5,534.6 1347.9,539.9 C1354.2,545.3 1366.2,554.7 1369.9,557.6" fill="none" stroke="#f2b48f" stroke-width="1.0" stroke-linecap="round" stroke-linejoin="round" opacity="0.9"/>
<path d="M1338.2,517.9 C1341.2,520.3 1350.3,527.6 1356.3,532.6 C1362.3,537.7 1371.3,545.6 1374.3,548.2" fill="none" stroke="#f3cf96" stroke-width="1.0" stroke-linecap="round" stroke-linejoin="round" opacity="0.9"/>
<path d="M1344.9,509.9 C1350.1,514.6 1364.8,528.5 1376.4,538.2 C1388.0,547.9 1408.0,563.2 1414.3,568.2" fill="none" stroke="#f2b48f" stroke-width="1.0" stroke-linecap="round" stroke-linejoin="round" opacity="0.9"/>
<path d="M1350.8,502.9 C1356.2,506.9 1372.8,518.1 1383.4,527.1 C1394.1,536.0 1409.5,551.7 1414.7,556.6" fill="none" stroke="#f3cf96" stroke-width="1.0" stroke-linecap="round" stroke-linejoin="round" opacity="0.9"/>
<path d="M1359.5,492.5 C1364.2,496.5 1377.4,507.6 1387.8,516.3 C1398.1,525.1 1416.1,540.0 1421.7,544.8" fill="none" stroke="#f2b48f" stroke-width="1.0" stroke-linecap="round" stroke-linejoin="round" opacity="0.9"/>
<path d="M1364.9,486.1 C1369.7,490.6 1383.0,504.1 1393.9,513.2 C1404.7,522.3 1424.0,536.1 1430.0,540.7" fill="none" stroke="#f3cf96" stroke-width="1.0" stroke-linecap="round" stroke-linejoin="round" opacity="0.9"/>
<path d="M1371.8,477.9 C1375.5,481.3 1386.2,492.0 1394.0,498.5 C1401.8,505.0 1414.3,514.0 1418.4,517.1" fill="none" stroke="#f2b48f" stroke-width="1.0" stroke-linecap="round" stroke-linejoin="round" opacity="0.9"/>
<path d="M1376.7,472.0 C1381.7,476.6 1395.9,490.6 1406.7,499.6 C1417.5,508.7 1435.7,522.0 1441.5,526.4" fill="none" stroke="#f3cf96" stroke-width="1.0" stroke-linecap="round" stroke-linejoin="round" opacity="0.9"/>
<path d="M1385.6,461.4 C1388.7,464.1 1398.0,472.9 1403.9,477.8 C1409.8,482.8 1418.1,488.8 1420.9,491.0" fill="none" stroke="#f2b48f" stroke-width="1.0" stroke-linecap="round" stroke-linejoin="round" opacity="0.9"/>
<path d="M1389.9,456.3 C1391.6,458.6 1395.6,465.9 1400.3,469.9 C1405.1,473.9 1415.5,478.6 1418.5,480.3" fill="none" stroke="#f3cf96" stroke-width="1.0" stroke-linecap="round" stroke-linejoin="round" opacity="0.9"/>
<rect x="1324.7" y="645.9" width="12" height="10" fill="#dcd9de" opacity="0.7" transform="rotate(-50 1330.7 650.9)"/>
<rect x="1331.7" y="618.5" width="12" height="10" fill="#dcd9de" opacity="0.7" transform="rotate(-50 1337.7 623.5)"/>
<rect x="1295.1" y="600.3" width="12" height="10" fill="#dcd9de" opacity="0.7" transform="rotate(-50 1301.1 605.3)"/>
<rect x="1358.6" y="516.1" width="12" height="10" fill="#dcd9de" opacity="0.7" transform="rotate(-50 1364.6 521.1)"/>
<rect x="1363.3" y="600.7" width="12" height="10" fill="#dcd9de" opacity="0.7" transform="rotate(-50 1369.3 605.7)"/>
<rect x="1405.0" y="547.1" width="12" height="10" fill="#dcd9de" opacity="0.7" transform="rotate(-50 1411.0 552.1)"/>
<rect x="1389.9" y="472.6" width="12" height="10" fill="#dcd9de" opacity="0.7" transform="rotate(-50 1395.9 477.6)"/>
<rect x="1344.4" y="609.5" width="12" height="10" fill="#dcd9de" opacity="0.7" transform="rotate(-50 1350.4 614.5)"/>
<rect x="1356.6" y="512.8" width="12" height="10" fill="#dcd9de" opacity="0.7" transform="rotate(-50 1362.6 517.8)"/>
<rect x="1345.6" y="547.0" width="12" height="10" fill="#dcd9de" opacity="0.7" transform="rotate(-50 1351.6 552.0)"/>
<path d="M1390.0,445.0 L1440.0,470.0" fill="none" stroke="#f3cf96" stroke-width="1.0" stroke-linecap="round" stroke-linejoin="round" opacity="0.9"/>
<path d="M1395.0,450.0 L1380.0,520.0" fill="none" stroke="#f3cf96" stroke-width="1.0" stroke-linecap="round" stroke-linejoin="round" opacity="0.8"/>
<path d="M1396.0,449.0 L1446.0,474.0" fill="none" stroke="#f3cf96" stroke-width="1.0" stroke-linecap="round" stroke-linejoin="round" opacity="0.9"/>
<path d="M1404.0,450.0 L1389.0,520.0" fill="none" stroke="#f3cf96" stroke-width="1.0" stroke-linecap="round" stroke-linejoin="round" opacity="0.8"/>
<path d="M1402.0,453.0 L1452.0,478.0" fill="none" stroke="#f3cf96" stroke-width="1.0" stroke-linecap="round" stroke-linejoin="round" opacity="0.9"/>
<path d="M1413.0,450.0 L1398.0,520.0" fill="none" stroke="#f3cf96" stroke-width="1.0" stroke-linecap="round" stroke-linejoin="round" opacity="0.8"/>
<path d="M1408.0,457.0 L1458.0,482.0" fill="none" stroke="#f3cf96" stroke-width="1.0" stroke-linecap="round" stroke-linejoin="round" opacity="0.9"/>
<path d="M1422.0,450.0 L1407.0,520.0" fill="none" stroke="#f3cf96" stroke-width="1.0" stroke-linecap="round" stroke-linejoin="round" opacity="0.8"/>
<path d="M1414.0,461.0 L1464.0,486.0" fill="none" stroke="#f3cf96" stroke-width="1.0" stroke-linecap="round" stroke-linejoin="round" opacity="0.9"/>
<path d="M1431.0,450.0 L1416.0,520.0" fill="none" stroke="#f3cf96" stroke-width="1.0" stroke-linecap="round" stroke-linejoin="round" opacity="0.8"/>
<path d="M1420.0,465.0 L1470.0,490.0" fill="none" stroke="#f3cf96" stroke-width="1.0" stroke-linecap="round" stroke-linejoin="round" opacity="0.9"/>
<path d="M1440.0,450.0 L1425.0,520.0" fill="none" stroke="#f3cf96" stroke-width="1.0" stroke-linecap="round" stroke-linejoin="round" opacity="0.8"/>
<path d="M1471.0,931.0 C1474.2,929.2 1482.7,923.8 1490.0,920.0 C1497.3,916.2 1506.7,911.0 1515.0,908.0 C1523.3,905.0 1535.8,903.0 1540.0,902.0" fill="none" stroke="#f3cf96" stroke-width="1.2" stroke-linecap="round" stroke-linejoin="round" opacity="0.9"/>
<path d="M1472.0,940.0 C1476.7,938.0 1490.3,931.7 1500.0,928.0 C1509.7,924.3 1521.3,920.7 1530.0,918.0 C1538.7,915.3 1548.3,913.0 1552.0,912.0" fill="none" stroke="#f3cf96" stroke-width="1.2" stroke-linecap="round" stroke-linejoin="round" opacity="0.9"/>
<path d="M1480.0,944.0 C1485.0,942.5 1500.0,938.2 1510.0,935.0 C1520.0,931.8 1535.0,926.7 1540.0,925.0" fill="none" stroke="#f3cf96" stroke-width="1.2" stroke-linecap="round" stroke-linejoin="round" opacity="0.9"/>
<path d="M1483.0,906.0 C1485.8,905.8 1496.5,903.0 1500.0,905.0 C1503.5,907.0 1505.7,913.8 1504.0,918.0 C1502.3,922.2 1492.3,928.0 1490.0,930.0" fill="none" stroke="#f3cf96" stroke-width="1.2" stroke-linecap="round" stroke-linejoin="round" opacity="0.9"/>
<path d="M1505.0,902.0 C1506.2,904.2 1509.8,909.5 1512.0,915.0 C1514.2,920.5 1517.0,931.7 1518.0,935.0" fill="none" stroke="#f3cf96" stroke-width="1.2" stroke-linecap="round" stroke-linejoin="round" opacity="0.9"/>
<path d="M1520.0,905.0 C1521.3,909.2 1526.0,923.5 1528.0,930.0 C1530.0,936.5 1531.3,941.7 1532.0,944.0" fill="none" stroke="#f3cf96" stroke-width="1.2" stroke-linecap="round" stroke-linejoin="round" opacity="0.9"/>
<path d="M1540.0,903.0 C1540.8,906.7 1543.7,918.2 1545.0,925.0 C1546.3,931.8 1547.5,940.8 1548.0,944.0" fill="none" stroke="#f3cf96" stroke-width="1.2" stroke-linecap="round" stroke-linejoin="round" opacity="0.9"/>
<path d="M1520.0,896.0 C1523.3,895.5 1534.0,893.2 1540.0,893.0 C1546.0,892.8 1553.3,894.7 1556.0,895.0" fill="none" stroke="#f3cf96" stroke-width="1.2" stroke-linecap="round" stroke-linejoin="round" opacity="0.9"/>
<path d="M1556.0,905.0 C1560.0,906.2 1572.7,910.3 1580.0,912.0 C1587.3,913.7 1596.7,914.5 1600.0,915.0" fill="none" stroke="#f3cf96" stroke-width="1.2" stroke-linecap="round" stroke-linejoin="round" opacity="0.9"/>
<path d="M1568.0,920.0 C1573.3,921.7 1593.5,929.5 1600.0,930.0 C1606.5,930.5 1605.8,924.2 1607.0,923.0" fill="none" stroke="#f3cf96" stroke-width="1.2" stroke-linecap="round" stroke-linejoin="round" opacity="0.9"/>
<path d="M1490.0,905.0 C1488.3,907.5 1483.2,915.7 1480.0,920.0 C1476.8,924.3 1472.5,929.2 1471.0,931.0" fill="none" stroke="#f3cf96" stroke-width="1.2" stroke-linecap="round" stroke-linejoin="round" opacity="0.9"/>
<path d="M1062.0,866.0 C1066.7,863.3 1080.3,854.3 1090.0,850.0 C1099.7,845.7 1115.0,841.7 1120.0,840.0" fill="none" stroke="#f3cf96" stroke-width="1.2" stroke-linecap="round" stroke-linejoin="round" opacity="0.9"/>
<path d="M1050.0,860.0 L1070.0,880.0" fill="none" stroke="#f3cf96" stroke-width="1.2" stroke-linecap="round" stroke-linejoin="round" opacity="0.9"/>
<path d="M1303.0,770.0 C1311.2,775.0 1341.0,792.5 1352.0,800.0 C1363.0,807.5 1363.8,808.3 1369.0,815.0 C1374.2,821.7 1377.7,830.2 1383.0,840.0 C1388.3,849.8 1395.8,862.5 1401.0,874.0 C1406.2,885.5 1410.7,900.2 1414.0,909.0 C1417.3,917.8 1419.5,921.2 1421.0,927.0 C1422.5,932.8 1422.7,941.2 1423.0,944.0" fill="none" stroke="#f2b48f" stroke-width="1.5" stroke-linecap="round" stroke-linejoin="round" opacity="1.0"/>
<path d="M1141.0,757.0 C1151.2,758.2 1185.8,762.8 1202.0,764.0 C1218.2,765.2 1225.0,765.2 1238.0,764.0 C1251.0,762.8 1273.0,758.2 1280.0,757.0" fill="none" stroke="#f2b48f" stroke-width="1.5" stroke-linecap="round" stroke-linejoin="round" opacity="1.0"/>
<path d="M1230.0,762.0 C1237.8,761.2 1265.0,756.3 1277.0,757.0 C1289.0,757.7 1294.8,762.2 1302.0,766.0 C1309.2,769.8 1317.0,777.7 1320.0,780.0" fill="none" stroke="#f2b48f" stroke-width="1.5" stroke-linecap="round" stroke-linejoin="round" opacity="1.0"/>
<path d="M1374.0,600.0 C1374.3,603.0 1376.0,608.2 1376.0,618.0 C1376.0,627.8 1371.3,653.0 1374.0,659.0 C1376.7,665.0 1386.7,656.7 1392.0,654.0 C1397.3,651.3 1399.2,649.0 1406.0,643.0 C1412.8,637.0 1427.8,625.2 1433.0,618.0 C1438.2,610.8 1436.3,603.0 1437.0,600.0" fill="none" stroke="#f2b48f" stroke-width="1.5" stroke-linecap="round" stroke-linejoin="round" opacity="1.0"/>
<path d="M1460.0,800.0 C1469.7,808.5 1505.0,836.7 1518.0,851.0 C1531.0,865.3 1534.2,878.3 1538.0,886.0 C1541.8,893.7 1540.5,895.2 1541.0,897.0" fill="none" stroke="#f2b48f" stroke-width="1.5" stroke-linecap="round" stroke-linejoin="round" opacity="1.0"/>
<path d="M1625.0,750.0 C1628.5,754.8 1644.5,769.3 1646.0,779.0 C1647.5,788.7 1640.5,797.3 1634.0,808.0 C1627.5,818.7 1608.8,835.2 1607.0,843.0 C1605.2,850.8 1613.5,844.0 1623.0,855.0 C1632.5,866.0 1657.2,900.0 1664.0,909.0" fill="none" stroke="#f2b48f" stroke-width="1.5" stroke-linecap="round" stroke-linejoin="round" opacity="1.0"/>
<path d="M1460.0,650.0 C1463.7,648.2 1476.0,645.3 1482.0,639.0 C1488.0,632.7 1493.0,621.8 1496.0,612.0 C1499.0,602.2 1498.5,592.0 1500.0,580.0 C1501.5,568.0 1501.3,553.3 1505.0,540.0 C1508.7,526.7 1519.5,516.7 1522.0,500.0 C1524.5,483.3 1520.3,450.0 1520.0,440.0" fill="none" stroke="#f2b48f" stroke-width="1.5" stroke-linecap="round" stroke-linejoin="round" opacity="1.0"/>
<path d="M1480.0,486.0 C1488.3,487.0 1513.3,490.0 1530.0,492.0 C1546.7,494.0 1565.0,495.0 1580.0,498.0 C1595.0,501.0 1606.7,509.0 1620.0,510.0 C1633.3,511.0 1648.3,507.7 1660.0,504.0 C1671.7,500.3 1685.0,490.7 1690.0,488.0" fill="none" stroke="#f2b48f" stroke-width="1.5" stroke-linecap="round" stroke-linejoin="round" opacity="1.0"/>
<path d="M1540.7,316.0 C1543.2,317.4 1550.3,319.9 1555.5,324.3 C1560.7,328.7 1567.1,335.4 1572.0,342.5 C1576.9,349.6 1576.8,360.6 1585.0,367.2 C1593.2,373.8 1612.7,378.4 1621.5,382.0 C1630.3,385.6 1632.5,388.7 1638.0,388.7 C1643.5,388.7 1646.8,384.5 1654.5,382.0 C1662.2,379.5 1679.2,375.2 1684.2,373.8" fill="none" stroke="#f2b48f" stroke-width="1.5" stroke-linecap="round" stroke-linejoin="round" opacity="1.0"/>
<path d="M1494.0,347.0 C1494.5,350.8 1493.0,365.5 1497.0,370.0 C1501.0,374.5 1512.3,371.7 1518.0,374.0 C1523.7,376.3 1528.8,382.3 1531.0,384.0" fill="none" stroke="#f2b48f" stroke-width="1.5" stroke-linecap="round" stroke-linejoin="round" opacity="1.0"/>
<path d="M1455.0,797.0 L1470.0,810.0" fill="none" stroke="#f2b48f" stroke-width="1.5" stroke-linecap="round" stroke-linejoin="round" opacity="1.0"/>
<path d="M1092.0,882.0 C1095.7,879.2 1108.8,870.5 1114.0,865.0 C1119.2,859.5 1117.0,853.2 1123.0,849.0 C1129.0,844.8 1145.5,841.5 1150.0,840.0" fill="none" stroke="#f2b48f" stroke-width="1.5" stroke-linecap="round" stroke-linejoin="round" opacity="1.0"/>
<path d="M1098.0,928.0 C1100.5,924.2 1107.5,913.3 1113.0,905.0 C1118.5,896.7 1125.2,886.5 1131.0,878.0 C1136.8,869.5 1143.8,861.5 1148.0,854.0 C1152.2,846.5 1155.5,841.2 1156.0,833.0 C1156.5,824.8 1152.2,813.8 1151.0,805.0 C1149.8,796.2 1149.3,784.2 1149.0,780.0" fill="none" stroke="#f2b48f" stroke-width="1.5" stroke-linecap="round" stroke-linejoin="round" opacity="1.0"/>
<path d="M1108.0,678.0 C1111.7,679.7 1124.5,685.0 1130.0,688.0 C1135.5,691.0 1137.3,691.2 1141.0,696.0 C1144.7,700.8 1148.5,712.0 1152.0,717.0 C1155.5,722.0 1156.7,723.3 1162.0,726.0 C1167.3,728.7 1175.8,730.5 1184.0,733.0 C1192.2,735.5 1205.7,739.5 1211.0,741.0 C1216.3,742.5 1215.2,741.8 1216.0,742.0" fill="none" stroke="#8d8383" stroke-width="1.4" stroke-linecap="round" stroke-linejoin="round" opacity="0.85"/>
<path d="M1280.0,685.0 C1276.0,688.5 1264.5,698.2 1256.0,706.0 C1247.5,713.8 1238.0,724.2 1229.0,732.0 C1220.0,739.8 1209.5,747.0 1202.0,753.0 C1194.5,759.0 1187.8,763.2 1184.0,768.0 C1180.2,772.8 1178.5,774.5 1179.0,782.0 C1179.5,789.5 1185.7,797.0 1187.0,813.0 C1188.3,829.0 1187.8,860.3 1187.0,878.0 C1186.2,895.7 1185.8,912.2 1182.0,919.0 C1178.2,925.8 1172.5,920.8 1164.0,919.0 C1155.5,917.2 1142.0,909.5 1131.0,908.0 C1120.0,906.5 1106.7,911.7 1098.0,910.0 C1089.3,908.3 1083.8,902.2 1079.0,898.0 C1074.2,893.8 1071.2,892.3 1069.0,885.0 C1066.8,877.7 1066.5,859.2 1066.0,854.0" fill="none" stroke="#8d8383" stroke-width="1.4" stroke-linecap="round" stroke-linejoin="round" opacity="0.85"/>
<path d="M1335.0,620.0 C1339.0,614.0 1350.5,591.2 1359.0,584.0 C1367.5,576.8 1377.0,579.2 1386.0,577.0 C1395.0,574.8 1405.5,575.2 1413.0,571.0 C1420.5,566.8 1423.2,558.2 1431.0,552.0 C1438.8,545.8 1451.8,539.3 1460.0,534.0 C1468.2,528.7 1476.7,522.3 1480.0,520.0" fill="none" stroke="#8d8383" stroke-width="1.4" stroke-linecap="round" stroke-linejoin="round" opacity="0.85"/>
<path d="M1300.0,600.0 C1303.3,602.0 1313.3,608.7 1320.0,612.0 C1326.7,615.3 1336.7,618.7 1340.0,620.0" fill="none" stroke="#8d8383" stroke-width="1.4" stroke-linecap="round" stroke-linejoin="round" opacity="0.85"/>
<path d="M1498.0,602.0 C1500.3,610.3 1507.2,635.8 1512.0,652.0 C1516.8,668.2 1520.0,693.3 1527.0,699.0 C1534.0,704.7 1549.5,688.2 1554.0,686.0" fill="none" stroke="#8d8383" stroke-width="1.4" stroke-linecap="round" stroke-linejoin="round" opacity="0.85"/>
<path d="M1000.0,942.0 C1005.5,937.7 1023.5,922.8 1033.0,916.0 C1042.5,909.2 1053.0,903.5 1057.0,901.0" fill="none" stroke="#8d8383" stroke-width="1.4" stroke-linecap="round" stroke-linejoin="round" opacity="0.85"/>
<path d="M1040.0,786.0 C1042.3,786.5 1048.7,786.7 1054.0,789.0 C1059.3,791.3 1069.0,798.2 1072.0,800.0" fill="none" stroke="#e48a9c" stroke-width="2.0" stroke-linecap="round" stroke-linejoin="round" opacity="1.0"/>
<path d="M1120.0,800.0 C1120.8,798.2 1122.5,795.0 1125.0,789.0 C1127.5,783.0 1131.5,771.2 1135.0,764.0 C1138.5,756.8 1141.5,752.7 1146.0,746.0 C1150.5,739.3 1156.3,731.2 1162.0,724.0 C1167.7,716.8 1174.0,711.3 1180.0,703.0 C1186.0,694.7 1192.5,682.2 1198.0,674.0 C1203.5,665.8 1207.8,660.7 1213.0,654.0 C1218.2,647.3 1219.2,639.7 1229.0,634.0 C1238.8,628.3 1263.2,625.7 1272.0,620.0 C1280.8,614.3 1276.5,609.0 1282.0,600.0 C1287.5,591.0 1296.7,575.8 1305.0,566.0 C1313.3,556.2 1324.5,548.2 1332.0,541.0 C1339.5,533.8 1345.2,527.8 1350.0,523.0 C1354.8,518.2 1356.5,515.7 1361.0,512.0 C1365.5,508.3 1372.8,507.0 1377.0,501.0 C1381.2,495.0 1382.7,482.5 1386.0,476.0 C1389.3,469.5 1392.5,466.2 1397.0,462.0 C1401.5,457.8 1405.8,461.5 1413.0,451.0 C1420.2,440.5 1435.5,407.7 1440.0,399.0" fill="none" stroke="#e48a9c" stroke-width="2.0" stroke-linecap="round" stroke-linejoin="round" opacity="1.0"/>
<path d="M1148.0,800.0 C1148.3,795.8 1148.5,782.2 1150.0,775.0 C1151.5,767.8 1153.2,764.8 1157.0,757.0 C1160.8,749.2 1168.5,734.3 1173.0,728.0 C1177.5,721.7 1175.5,724.2 1184.0,719.0 C1192.5,713.8 1215.0,703.7 1224.0,697.0 C1233.0,690.3 1232.7,686.2 1238.0,679.0 C1243.3,671.8 1249.0,660.8 1256.0,654.0 C1263.0,647.2 1270.3,643.7 1280.0,638.0 C1289.7,632.3 1303.8,629.7 1314.0,620.0 C1324.2,610.3 1332.0,591.3 1341.0,580.0 C1350.0,568.7 1357.5,561.0 1368.0,552.0 C1378.5,543.0 1393.5,535.7 1404.0,526.0 C1414.5,516.3 1422.5,503.7 1431.0,494.0 C1439.5,484.3 1448.0,480.3 1455.0,468.0 C1462.0,455.7 1470.0,428.0 1473.0,420.0" fill="none" stroke="#e48a9c" stroke-width="2.0" stroke-linecap="round" stroke-linejoin="round" opacity="1.0"/>
<path d="M1230.0,733.0 C1233.0,730.0 1242.0,721.5 1248.0,715.0 C1254.0,708.5 1260.8,699.3 1266.0,694.0 C1271.2,688.7 1274.5,686.0 1279.0,683.0 C1283.5,680.0 1287.7,680.0 1293.0,676.0 C1298.3,672.0 1305.7,664.8 1311.0,659.0 C1316.3,653.2 1321.2,647.2 1325.0,641.0 C1328.8,634.8 1331.2,628.8 1334.0,622.0 C1336.8,615.2 1339.3,604.0 1342.0,600.0 C1344.7,596.0 1342.7,601.8 1350.0,598.0 C1357.3,594.2 1374.0,585.3 1386.0,577.0 C1398.0,568.7 1411.5,557.7 1422.0,548.0 C1432.5,538.3 1441.7,530.3 1449.0,519.0 C1456.3,507.7 1461.5,491.2 1466.0,480.0 C1470.5,468.8 1471.3,462.0 1476.0,452.0 C1480.7,442.0 1491.0,425.3 1494.0,420.0" fill="none" stroke="#e48a9c" stroke-width="2.0" stroke-linecap="round" stroke-linejoin="round" opacity="1.0"/>
<path d="M1072.0,852.0 C1073.7,851.7 1074.8,851.3 1082.0,850.0 C1089.2,848.7 1102.7,845.5 1115.0,844.0 C1127.3,842.5 1142.3,842.8 1156.0,841.0 C1169.7,839.2 1183.0,834.2 1197.0,833.0 C1211.0,831.8 1230.7,833.2 1240.0,834.0 C1249.3,834.8 1246.8,836.5 1253.0,838.0 C1259.2,839.5 1268.7,843.8 1277.0,843.0 C1285.3,842.2 1290.5,835.3 1303.0,833.0 C1315.5,830.7 1339.5,831.7 1352.0,829.0 C1364.5,826.3 1366.5,821.3 1378.0,817.0 C1389.5,812.7 1405.7,807.3 1421.0,803.0 C1436.3,798.7 1454.5,795.0 1470.0,791.0 C1485.5,787.0 1504.3,782.7 1514.0,779.0 C1523.7,775.3 1525.7,770.7 1528.0,769.0" fill="none" stroke="#e48a9c" stroke-width="2.0" stroke-linecap="round" stroke-linejoin="round" opacity="1.0"/>
<path d="M1000.0,829.0 C1005.5,830.7 1024.0,836.5 1033.0,839.0 C1042.0,841.5 1047.5,841.8 1054.0,844.0 C1060.5,846.2 1067.3,848.5 1072.0,852.0 C1076.7,855.5 1078.7,860.0 1082.0,865.0 C1085.3,870.0 1088.7,877.5 1092.0,882.0 C1095.3,886.5 1096.5,888.2 1102.0,892.0 C1107.5,895.8 1117.3,901.2 1125.0,905.0 C1132.7,908.8 1138.8,912.7 1148.0,915.0 C1157.2,917.3 1169.2,917.5 1180.0,919.0 C1190.8,920.5 1203.0,922.5 1213.0,924.0 C1223.0,925.5 1228.5,924.7 1240.0,928.0 C1251.5,931.3 1275.0,941.3 1282.0,944.0" fill="none" stroke="#e48a9c" stroke-width="2.0" stroke-linecap="round" stroke-linejoin="round" opacity="1.0"/>
<path d="M1033.0,790.0 C1035.2,789.5 1042.0,786.0 1046.0,787.0 C1050.0,788.0 1051.0,793.0 1057.0,796.0 C1063.0,799.0 1074.0,802.7 1082.0,805.0 C1090.0,807.3 1099.0,808.2 1105.0,810.0 C1111.0,811.8 1115.0,813.8 1118.0,816.0 C1121.0,818.2 1122.5,819.0 1123.0,823.0 C1123.5,827.0 1122.3,833.0 1121.0,840.0 C1119.7,847.0 1118.8,858.0 1115.0,865.0 C1111.2,872.0 1103.0,877.5 1098.0,882.0 C1093.0,886.5 1091.8,888.8 1085.0,892.0 C1078.2,895.2 1061.7,899.5 1057.0,901.0" fill="none" stroke="#e48a9c" stroke-width="2.0" stroke-linecap="round" stroke-linejoin="round" opacity="1.0"/>
<path d="M1054.0,842.0 C1058.7,841.0 1073.5,838.2 1082.0,836.0 C1090.5,833.8 1099.5,832.8 1105.0,829.0 C1110.5,825.2 1111.7,818.5 1115.0,813.0 C1118.3,807.5 1122.3,801.5 1125.0,796.0 C1127.7,790.5 1130.0,782.7 1131.0,780.0" fill="none" stroke="#e48a9c" stroke-width="2.0" stroke-linecap="round" stroke-linejoin="round" opacity="1.0"/>
<path d="M1291.0,770.0 C1289.0,775.8 1284.8,793.3 1279.0,805.0 C1273.2,816.7 1264.2,830.2 1256.0,840.0 C1247.8,849.8 1238.5,857.7 1230.0,864.0 C1221.5,870.3 1213.3,872.3 1205.0,878.0 C1196.7,883.7 1184.3,891.2 1180.0,898.0 C1175.7,904.8 1179.2,915.5 1179.0,919.0" fill="none" stroke="#e48a9c" stroke-width="2.0" stroke-linecap="round" stroke-linejoin="round" opacity="1.0"/>
<path d="M1334.0,942.0 C1345.7,939.5 1383.7,930.5 1404.0,927.0 C1424.3,923.5 1445.0,919.3 1456.0,921.0 C1467.0,922.7 1462.7,933.2 1470.0,937.0 C1477.3,940.8 1495.0,942.8 1500.0,944.0" fill="none" stroke="#e48a9c" stroke-width="2.0" stroke-linecap="round" stroke-linejoin="round" opacity="1.0"/>
<path d="M1230.0,645.0 C1235.3,647.7 1253.7,652.8 1262.0,661.0 C1270.3,669.2 1274.2,683.8 1280.0,694.0 C1285.8,704.2 1294.0,712.2 1297.0,722.0 C1300.0,731.8 1299.3,743.3 1298.0,753.0 C1296.7,762.7 1290.2,777.2 1289.0,780.0 C1287.8,782.8 1290.7,771.7 1291.0,770.0" fill="none" stroke="#e48a9c" stroke-width="2.0" stroke-linecap="round" stroke-linejoin="round" opacity="1.0"/>
<path d="M1280.0,604.0 C1285.2,605.5 1301.3,610.7 1311.0,613.0 C1320.7,615.3 1329.0,617.5 1338.0,618.0 C1347.0,618.5 1356.0,616.0 1365.0,616.0 C1374.0,616.0 1384.5,619.8 1392.0,618.0 C1399.5,616.2 1405.5,608.0 1410.0,605.0 C1414.5,602.0 1417.5,600.8 1419.0,600.0" fill="none" stroke="#e48a9c" stroke-width="2.0" stroke-linecap="round" stroke-linejoin="round" opacity="1.0"/>
<path d="M1222.0,643.0 C1228.7,646.7 1252.3,659.8 1262.0,665.0 C1271.7,670.2 1277.0,672.5 1280.0,674.0" fill="none" stroke="#e48a9c" stroke-width="2.0" stroke-linecap="round" stroke-linejoin="round" opacity="1.0"/>
<path d="M1363.0,516.0 C1366.8,521.3 1379.2,539.0 1386.0,548.0 C1392.8,557.0 1398.0,562.2 1404.0,570.0 C1410.0,577.8 1416.7,586.7 1422.0,595.0 C1427.3,603.3 1432.0,613.2 1436.0,620.0 C1440.0,626.8 1441.7,628.0 1446.0,636.0 C1450.3,644.0 1458.0,659.0 1462.0,668.0 C1466.0,677.0 1466.5,681.0 1470.0,690.0 C1473.5,699.0 1476.8,714.0 1483.0,722.0 C1489.2,730.0 1500.7,731.7 1507.0,738.0 C1513.3,744.3 1517.5,754.2 1521.0,760.0 C1524.5,765.8 1525.2,766.3 1528.0,773.0 C1530.8,779.7 1534.8,787.7 1538.0,800.0 C1541.2,812.3 1544.8,834.3 1547.0,847.0 C1549.2,859.7 1550.7,866.3 1551.0,876.0 C1551.3,885.7 1550.3,893.7 1549.0,905.0 C1547.7,916.3 1544.0,937.5 1543.0,944.0" fill="none" stroke="#e48a9c" stroke-width="2.0" stroke-linecap="round" stroke-linejoin="round" opacity="1.0"/>
<path d="M1478.0,587.0 C1487.0,594.0 1519.2,620.5 1532.0,629.0 C1544.8,637.5 1543.0,633.5 1555.0,638.0 C1567.0,642.5 1586.8,650.7 1604.0,656.0 C1621.2,661.3 1643.7,667.0 1658.0,670.0 C1672.3,673.0 1684.7,673.3 1690.0,674.0" fill="none" stroke="#e48a9c" stroke-width="2.0" stroke-linecap="round" stroke-linejoin="round" opacity="1.0"/>
<path d="M1440.0,490.0 C1448.0,493.0 1473.0,502.0 1488.0,508.0 C1503.0,514.0 1516.7,522.7 1530.0,526.0 C1543.3,529.3 1556.3,524.7 1568.0,528.0 C1579.7,531.3 1588.0,540.0 1600.0,546.0 C1612.0,552.0 1630.0,556.7 1640.0,564.0 C1650.0,571.3 1655.3,584.0 1660.0,590.0 C1664.7,596.0 1663.0,594.2 1668.0,600.0 C1673.0,605.8 1686.3,620.8 1690.0,625.0" fill="none" stroke="#e48a9c" stroke-width="2.0" stroke-linecap="round" stroke-linejoin="round" opacity="1.0"/>
<path d="M1440.0,464.0 C1446.0,465.7 1464.0,471.3 1476.0,474.0 C1488.0,476.7 1496.7,479.0 1512.0,480.0 C1527.3,481.0 1553.3,480.7 1568.0,480.0 C1582.7,479.3 1590.0,477.7 1600.0,476.0 C1610.0,474.3 1613.0,470.7 1628.0,470.0 C1643.0,469.3 1679.7,471.7 1690.0,472.0" fill="none" stroke="#e48a9c" stroke-width="2.0" stroke-linecap="round" stroke-linejoin="round" opacity="1.0"/>
<path d="M1690.0,530.0 C1680.0,530.0 1645.0,527.0 1630.0,530.0 C1615.0,533.0 1608.3,541.0 1600.0,548.0 C1591.7,555.0 1585.0,563.3 1580.0,572.0 C1575.0,580.7 1574.2,590.0 1570.0,600.0 C1565.8,610.0 1558.0,621.8 1555.0,632.0 C1552.0,642.2 1552.5,652.8 1552.0,661.0 C1551.5,669.2 1550.3,674.5 1552.0,681.0 C1553.7,687.5 1561.8,690.2 1562.0,700.0 C1562.2,709.8 1556.7,726.7 1553.0,740.0 C1549.3,753.3 1542.2,773.3 1540.0,780.0" fill="none" stroke="#e48a9c" stroke-width="2.0" stroke-linecap="round" stroke-linejoin="round" opacity="1.0"/>
<path d="M1584.0,580.0 C1582.0,585.2 1577.0,602.3 1572.0,611.0 C1567.0,619.7 1557.0,628.5 1554.0,632.0" fill="none" stroke="#e48a9c" stroke-width="2.0" stroke-linecap="round" stroke-linejoin="round" opacity="1.0"/>
<path d="M1604.0,656.0 C1603.3,661.3 1598.8,677.8 1600.0,688.0 C1601.2,698.2 1609.5,708.7 1611.0,717.0 C1612.5,725.3 1610.5,730.8 1609.0,738.0 C1607.5,745.2 1602.0,751.5 1602.0,760.0 C1602.0,768.5 1606.5,781.0 1609.0,789.0 C1611.5,797.0 1616.0,801.5 1617.0,808.0 C1618.0,814.5 1617.0,820.8 1615.0,828.0 C1613.0,835.2 1611.5,844.7 1605.0,851.0 C1598.5,857.3 1584.7,860.2 1576.0,866.0 C1567.3,871.8 1556.8,882.7 1553.0,886.0" fill="none" stroke="#e48a9c" stroke-width="2.0" stroke-linecap="round" stroke-linejoin="round" opacity="1.0"/>
<path d="M1546.0,908.0 C1552.8,909.2 1576.3,913.7 1587.0,915.0 C1597.7,916.3 1597.8,916.5 1610.0,916.0 C1622.2,915.5 1646.7,910.5 1660.0,912.0 C1673.3,913.5 1685.0,922.8 1690.0,925.0" fill="none" stroke="#e48a9c" stroke-width="2.0" stroke-linecap="round" stroke-linejoin="round" opacity="1.0"/>
<path d="M1549.0,860.0 C1546.2,863.0 1537.0,871.7 1532.0,878.0 C1527.0,884.3 1523.5,893.5 1519.0,898.0 C1514.5,902.5 1507.3,903.8 1505.0,905.0" fill="none" stroke="#e48a9c" stroke-width="2.0" stroke-linecap="round" stroke-linejoin="round" opacity="1.0"/>
<path d="M1587.0,860.0 C1583.0,863.5 1568.0,874.2 1563.0,881.0 C1558.0,887.8 1558.8,897.0 1557.0,901.0 C1555.2,905.0 1552.8,904.3 1552.0,905.0" fill="none" stroke="#e48a9c" stroke-width="2.0" stroke-linecap="round" stroke-linejoin="round" opacity="1.0"/>
<path d="M1544.0,930.0 L1549.0,944.0" fill="none" stroke="#e48a9c" stroke-width="2.0" stroke-linecap="round" stroke-linejoin="round" opacity="1.0"/>
<path d="M1450.0,923.0 C1451.3,922.8 1454.7,920.7 1458.0,922.0 C1461.3,923.3 1466.0,928.3 1470.0,931.0 C1474.0,933.7 1477.0,935.8 1482.0,938.0 C1487.0,940.2 1497.0,943.0 1500.0,944.0" fill="none" stroke="#e48a9c" stroke-width="2.0" stroke-linecap="round" stroke-linejoin="round" opacity="1.0"/>
<path d="M1460.0,795.0 L1514.0,779.0" fill="none" stroke="#e48a9c" stroke-width="2.0" stroke-linecap="round" stroke-linejoin="round" opacity="1.0"/>
<path d="M1616.0,400.0 C1616.7,406.7 1617.3,431.3 1620.0,440.0 C1622.7,448.7 1630.3,447.0 1632.0,452.0 C1633.7,457.0 1630.3,467.0 1630.0,470.0" fill="none" stroke="#e48a9c" stroke-width="2.0" stroke-linecap="round" stroke-linejoin="round" opacity="1.0"/>
<path d="M1592.0,570.0 L1640.0,600.0" fill="none" stroke="#e48a9c" stroke-width="2.0" stroke-linecap="round" stroke-linejoin="round" opacity="1.0"/>
<path d="M1652.0,580.0 C1655.3,584.5 1665.7,600.7 1672.0,607.0 C1678.3,613.3 1687.0,616.2 1690.0,618.0" fill="none" stroke="#e48a9c" stroke-width="2.0" stroke-linecap="round" stroke-linejoin="round" opacity="1.0"/>
<path d="M1608.0,580.0 C1611.8,583.0 1621.8,592.0 1631.0,598.0 C1640.2,604.0 1657.3,610.0 1663.0,616.0 C1668.7,622.0 1665.8,628.7 1665.0,634.0 C1664.2,639.3 1660.7,643.8 1658.0,648.0 C1655.3,652.2 1650.5,657.2 1649.0,659.0" fill="none" stroke="#e48a9c" stroke-width="2.0" stroke-linecap="round" stroke-linejoin="round" opacity="1.0"/>
<path d="M1391.0,471.0 C1396.2,472.7 1410.5,476.5 1422.0,481.0 C1433.5,485.5 1453.7,495.2 1460.0,498.0" fill="none" stroke="#e48a9c" stroke-width="2.0" stroke-linecap="round" stroke-linejoin="round" opacity="1.0"/>
<path d="M1422.0,458.0 L1460.0,467.0" fill="none" stroke="#e48a9c" stroke-width="2.0" stroke-linecap="round" stroke-linejoin="round" opacity="1.0"/>
<path d="M1480.0,400.0 C1477.3,405.0 1468.7,420.0 1464.0,430.0 C1459.3,440.0 1456.0,452.3 1452.0,460.0 C1448.0,467.7 1442.0,473.3 1440.0,476.0" fill="none" stroke="#e48a9c" stroke-width="2.0" stroke-linecap="round" stroke-linejoin="round" opacity="1.0"/>
<path d="M1575.0,298.0 C1576.2,300.5 1581.2,307.7 1582.0,313.0 C1582.8,318.3 1584.3,325.2 1580.0,330.0 C1575.7,334.8 1563.8,335.8 1556.0,342.0 C1548.2,348.2 1541.5,357.7 1533.0,367.0 C1524.5,376.3 1515.3,389.2 1505.0,398.0 C1494.7,406.8 1476.7,416.3 1471.0,420.0" fill="none" stroke="#e48a9c" stroke-width="2.0" stroke-linecap="round" stroke-linejoin="round" opacity="1.0"/>
<path d="M1494.0,420.0 C1498.3,415.3 1509.8,403.8 1520.0,392.0 C1530.2,380.2 1546.3,358.2 1555.0,349.0 C1563.7,339.8 1566.2,341.8 1572.0,337.0 C1577.8,332.2 1584.5,325.7 1590.0,320.0 C1595.5,314.3 1600.8,306.0 1605.0,303.0 C1609.2,300.0 1612.2,301.7 1615.0,302.0 C1617.8,302.3 1619.5,307.3 1622.0,305.0 C1624.5,302.7 1627.5,294.7 1630.0,288.0 C1632.5,281.3 1635.8,270.5 1637.0,265.0 C1638.2,259.5 1637.0,256.7 1637.0,255.0" fill="none" stroke="#e48a9c" stroke-width="2.0" stroke-linecap="round" stroke-linejoin="round" opacity="1.0"/>
<path d="M1613.0,295.0 C1612.5,302.2 1609.7,329.2 1610.0,338.0 C1610.3,346.8 1613.8,342.7 1615.0,348.0 C1616.2,353.3 1616.2,363.0 1617.0,370.0 C1617.8,377.0 1619.8,381.7 1620.0,390.0 C1620.2,398.3 1618.3,415.0 1618.0,420.0" fill="none" stroke="#e48a9c" stroke-width="2.0" stroke-linecap="round" stroke-linejoin="round" opacity="1.0"/>
<path d="M1440.0,399.0 C1445.5,396.5 1463.0,390.2 1473.0,384.0 C1483.0,377.8 1492.2,371.8 1500.0,362.0 C1507.8,352.2 1512.5,334.7 1520.0,325.0 C1527.5,315.3 1536.2,308.7 1545.0,304.0 C1553.8,299.3 1568.3,298.2 1573.0,297.0" fill="none" stroke="#e48a9c" stroke-width="2.0" stroke-linecap="round" stroke-linejoin="round" opacity="1.0"/>
<path d="M1352,498 C1362,502 1372,506 1380,516 C1386,524 1392,532 1398,545" fill="none" stroke="#aad3df" stroke-width="2.2" stroke-linecap="round"/>
<rect x="1293" y="580" width="14" height="10" fill="#d9d7de" opacity="0.55" transform="rotate(-50 1300 585)"/>
<rect x="1308" y="565" width="14" height="10" fill="#d9d7de" opacity="0.55" transform="rotate(-50 1315 570)"/>
<rect x="1323" y="547" width="14" height="10" fill="#d9d7de" opacity="0.55" transform="rotate(-50 1330 552)"/>
<rect x="1338" y="530" width="14" height="10" fill="#d9d7de" opacity="0.55" transform="rotate(-50 1345 535)"/>
<rect x="1283" y="595" width="14" height="10" fill="#d9d7de" opacity="0.55" transform="rotate(-50 1290 600)"/>
<rect x="1313" y="590" width="14" height="10" fill="#d9d7de" opacity="0.55" transform="rotate(-50 1320 595)"/>
<rect x="1333" y="570" width="14" height="10" fill="#d9d7de" opacity="0.55" transform="rotate(-50 1340 575)"/>
<rect x="1353" y="555" width="14" height="10" fill="#d9d7de" opacity="0.55" transform="rotate(-50 1360 560)"/>
<rect x="1368" y="535" width="14" height="10" fill="#d9d7de" opacity="0.55" transform="rotate(-50 1375 540)"/>
<rect x="1388" y="515" width="14" height="10" fill="#d9d7de" opacity="0.55" transform="rotate(-50 1395 520)"/>
<rect x="1403" y="495" width="14" height="10" fill="#d9d7de" opacity="0.55" transform="rotate(-50 1410 500)"/>
<rect x="1418" y="475" width="14" height="10" fill="#d9d7de" opacity="0.55" transform="rotate(-50 1425 480)"/>
<rect x="1358" y="595" width="14" height="10" fill="#d9d7de" opacity="0.55" transform="rotate(-50 1365 600)"/>
<rect x="1383" y="580" width="14" height="10" fill="#d9d7de" opacity="0.55" transform="rotate(-50 1390 585)"/>
<rect x="1403" y="555" width="14" height="10" fill="#d9d7de" opacity="0.55" transform="rotate(-50 1410 560)"/>
<g fill="none" stroke="#9282a9" stroke-width="2.6" opacity="0.95">
<circle cx="1068" cy="206" r="103"/>
<circle cx="1259" cy="229" r="87"/>
<circle cx="949" cy="500" r="92"/>
<circle cx="1115" cy="470" r="76"/>
<ellipse cx="762.6" cy="638" rx="6" ry="4.8"/><circle cx="765" cy="683" r="3.5"/>
<path d="M747.0,782.0 L799.0,797.0"/>
<path d="M799.0,797.0 L871.0,784.0"/>
<path d="M871.0,784.0 C879.1,777.5 904.9,756.5 919.5,745.0 C934.1,733.5 940.5,729.8 958.5,715.0 C976.5,700.2 1016.0,665.8 1027.5,656.0"/>
<path d="M1027.5,656.0 C1028.7,652.4 1031.4,640.8 1034.5,634.5 C1037.6,628.2 1041.8,623.0 1046.0,618.0 C1050.2,613.0 1049.7,610.9 1060.0,604.6 C1070.3,598.3 1095.0,585.9 1108.0,580.0 C1121.0,574.1 1133.0,570.8 1138.0,569.0"/>
<path d="M1138.0,569.0 C1140.3,565.7 1147.0,555.7 1152.0,549.0 C1157.0,542.3 1161.8,535.1 1168.0,529.0 C1174.2,522.9 1181.9,516.9 1189.0,512.6 C1196.1,508.3 1206.8,508.0 1210.6,503.4 C1214.4,498.8 1211.8,488.1 1212.0,485.0"/>
<path d="M1212.0,485.0 C1214.3,479.6 1219.8,462.8 1226.0,452.8 C1232.2,442.8 1244.4,431.3 1249.0,425.2 C1253.6,419.1 1252.8,417.5 1253.6,416.0"/>
<path d="M1253.6,416.0 C1256.7,411.8 1265.1,398.4 1272.0,390.7 C1278.9,383.0 1286.6,375.2 1295.0,370.0 C1303.4,364.8 1313.4,361.1 1322.6,359.6 C1331.8,358.1 1345.4,360.6 1350.0,360.8"/>
<path d="M1350.0,360.8 L1354.8,356.0"/>
<path d="M1354.8,356.0 C1357.1,353.0 1363.2,346.2 1368.6,337.8 C1374.0,329.4 1380.1,314.8 1387.0,305.6 C1393.9,296.4 1402.3,289.1 1410.0,282.6 C1417.7,276.1 1425.0,270.9 1433.0,266.5 C1441.0,262.1 1454.1,257.8 1458.3,256.0"/>
<path d="M1613.0,596.0 L1597.0,607.0 L1590.0,612.0 L1575.0,612.0 L1564.0,621.0 L1555.0,632.0 L1555.0,681.0 L1563.0,688.0 L1563.0,733.0 L1548.0,749.0 L1555.0,758.0 L1538.0,775.0 L1538.0,798.0 L1557.0,831.0 L1561.0,845.0 L1563.0,876.0 L1551.0,890.0 L1534.0,909.0 L1532.0,919.0 L1547.0,924.0 L1563.0,930.0 L1596.0,923.0 L1609.0,924.0 L1613.0,936.0 L1611.0,944.0" stroke-width="2.8"/>
<path d="M1613.0,596.0 L1631.0,603.0 L1644.0,614.0 L1649.0,621.0 L1642.0,643.0 L1649.0,652.0 L1655.0,670.0" stroke-width="2.8"/>
<path d="M1617.0,641.0 L1618.0,648.0 L1656.0,704.0 L1672.0,708.0 L1690.0,695.0" stroke-width="2.8"/>
<path d="M1683.0,255.0 L1685.0,320.0 L1660.0,335.0 L1640.0,345.0" stroke-width="2.4"/>
</g>
<g fill="none" stroke="#8f86a6" stroke-width="1.2" opacity="0.8">
<path d="M1138.0,569.0 L1202.6,634.5 L1253.0,655.0"/>
<path d="M1285.8,379.2 L1373.2,459.7 L1380.0,461.0"/>
<path d="M1338.7,362.0 L1405.4,425.2"/>
<path d="M1371.0,340.0 L1410.0,390.7"/>
<path d="M1389.0,308.0 L1440.0,377.0"/>
<path d="M1483.0,255.0 L1529.0,324.0 L1559.0,360.6 L1564.0,387.0 L1572.0,420.0 L1580.0,460.0"/>
</g>
<g stroke="#ffffff" stroke-width="1" opacity="0.35">
<line x1="920.5" y1="255" x2="920.5" y2="944"/>
<line x1="1187.5" y1="255" x2="1187.5" y2="944"/>
<line x1="1454.5" y1="255" x2="1454.5" y2="944"/>
<line x1="747" y1="262.5" x2="1690" y2="262.5"/>
<line x1="747" y1="529.5" x2="1690" y2="529.5"/>
<line x1="747" y1="796.5" x2="1690" y2="796.5"/>
</g>
<text x="1690" y="268.14" font-family="Liberation Sans, sans-serif" font-size="11.5" fill="#55555c" text-anchor="end" font-weight="400" stroke="#f6f4f0" stroke-width="2.5" paint-order="stroke" stroke-opacity="0.85">Al Hayilah</text>
<text x="1595.7" y="294.56" font-family="Liberation Sans, sans-serif" font-size="11" fill="#a07aa8" text-anchor="middle" font-weight="400" stroke="#f6f4f0" stroke-width="2.5" paint-order="stroke" stroke-opacity="0.85">راس الخيمة</text>
<text x="1595.7" y="336.14" font-family="Liberation Sans, sans-serif" font-size="11.5" fill="#55555c" text-anchor="middle" font-weight="400" stroke="#f6f4f0" stroke-width="2.5" paint-order="stroke" stroke-opacity="0.85">Maqawwarah</text>
<text x="1625.6" y="352.14" font-family="Liberation Sans, sans-serif" font-size="11.5" fill="#55555c" text-anchor="middle" font-weight="400" stroke="#f6f4f0" stroke-width="2.5" paint-order="stroke" stroke-opacity="0.85">Himer Al 'Alam</text>
<text x="1690" y="370.64" font-family="Liberation Sans, sans-serif" font-size="11.5" fill="#55555c" text-anchor="end" font-weight="400" stroke="#f6f4f0" stroke-width="2.5" paint-order="stroke" stroke-opacity="0.85">Zahir A</text>
<text x="1690" y="416.64" font-family="Liberation Sans, sans-serif" font-size="11.5" fill="#55555c" text-anchor="end" font-weight="400" stroke="#f6f4f0" stroke-width="2.5" paint-order="stroke" stroke-opacity="0.85">Sha'biyy</text>
<text x="1690" y="430.14" font-family="Liberation Sans, sans-serif" font-size="11.5" fill="#55555c" text-anchor="end" font-weight="400" stroke="#f6f4f0" stroke-width="2.5" paint-order="stroke" stroke-opacity="0.85">Qabr al Ya</text>
<text x="1555.5" y="505.32" font-family="Liberation Sans, sans-serif" font-size="12" fill="#55555c" text-anchor="middle" font-weight="400" stroke="#f6f4f0" stroke-width="2.5" paint-order="stroke" stroke-opacity="0.85">As Saman</text>
<text x="1654.4" y="499.14" font-family="Liberation Sans, sans-serif" font-size="11.5" fill="#55555c" text-anchor="middle" font-weight="400" stroke="#f6f4f0" stroke-width="2.5" paint-order="stroke" stroke-opacity="0.85">Siji</text>
<text x="1480.8" y="347.82" font-family="Liberation Sans, sans-serif" font-size="12" fill="#a07aa8" text-anchor="middle" font-weight="400" stroke="#f6f4f0" stroke-width="2.5" paint-order="stroke" stroke-opacity="0.85">أم القيوين</text>
<text x="1446.8" y="374.32" font-family="Liberation Sans, sans-serif" font-size="12" fill="#4a4a50" text-anchor="middle" font-weight="400" stroke="#f6f4f0" stroke-width="2.5" paint-order="stroke" stroke-opacity="0.85">أم القيوين</text>
<text x="1382.4" y="392.71999999999997" font-family="Liberation Sans, sans-serif" font-size="12" fill="#a07aa8" text-anchor="middle" font-weight="400" stroke="#f6f4f0" stroke-width="2.5" paint-order="stroke" stroke-opacity="0.85">امارة عجمان</text>
<text x="1412.3" y="440.0" font-family="Liberation Sans, sans-serif" font-size="12.5" fill="#4a4a50" text-anchor="middle" font-weight="400" stroke="#f6f4f0" stroke-width="2.5" paint-order="stroke" stroke-opacity="0.85">عجمان</text>
<text x="1402" y="459.5" font-family="Liberation Sans, sans-serif" font-size="12.5" fill="#4a4a50" text-anchor="middle" font-weight="400" stroke="#f6f4f0" stroke-width="2.5" paint-order="stroke" stroke-opacity="0.85">الشارقة</text>
<text x="1445" y="410.78" font-family="Liberation Sans, sans-serif" font-size="10.5" fill="#4a4a50" text-anchor="middle" font-weight="400" stroke="#f6f4f0" stroke-width="2.5" paint-order="stroke" stroke-opacity="0.85">الحمرية</text>
<text x="1360.8" y="488.78" font-family="Liberation Sans, sans-serif" font-size="10.5" fill="#4a4a50" text-anchor="middle" font-weight="400" stroke="#f6f4f0" stroke-width="2.5" paint-order="stroke" stroke-opacity="0.85">ديرة</text>
<text x="1355.4" y="507.5" font-family="Liberation Sans, sans-serif" font-size="12.5" fill="#4a4a50" text-anchor="middle" font-weight="400" stroke="#f6f4f0" stroke-width="2.5" paint-order="stroke" stroke-opacity="0.85">دبي</text>
<text x="1317.6" y="572.6600000000001" font-family="Liberation Sans, sans-serif" font-size="11" fill="#a07aa8" text-anchor="middle" font-weight="400" stroke="#f6f4f0" stroke-width="2.5" paint-order="stroke" stroke-opacity="0.85">دبي</text>
<text x="949" y="504.96" font-family="Liberation Sans, sans-serif" font-size="11" fill="#a07aa8" text-anchor="middle" font-weight="400" stroke="#f6f4f0" stroke-width="2.5" paint-order="stroke" stroke-opacity="0.85">الشارقة</text>
<text x="1201.7" y="650.82" font-family="Liberation Sans, sans-serif" font-size="12" fill="#4a4a50" text-anchor="middle" font-weight="400" stroke="#f6f4f0" stroke-width="2.5" paint-order="stroke" stroke-opacity="0.85">غنتوت</text>
<text x="1006.5" y="834.12" font-family="Liberation Sans, sans-serif" font-size="12" fill="#4a4a50" text-anchor="middle" font-weight="400" stroke="#f6f4f0" stroke-width="2.5" paint-order="stroke" stroke-opacity="0.85">أبو ظبي</text>
<text x="1408" y="706.32" font-family="Liberation Sans, sans-serif" font-size="12" fill="#3f9b46" text-anchor="middle" font-weight="400" stroke="#f6f4f0" stroke-width="2.5" paint-order="stroke" stroke-opacity="0.85">محمية المرموم</text>
<text x="1408" y="721.32" font-family="Liberation Sans, sans-serif" font-size="12" fill="#3f9b46" text-anchor="middle" font-weight="400" stroke="#f6f4f0" stroke-width="2.5" paint-order="stroke" stroke-opacity="0.85">الصحراوية</text>
<text x="1212" y="801.96" font-family="Liberation Sans, sans-serif" font-size="11" fill="#b84f4f" text-anchor="middle" font-weight="400" stroke="#f6f4f0" stroke-width="2.5" paint-order="stroke" stroke-opacity="0.85">مدينة زايد</text>
<text x="1215.5" y="814.96" font-family="Liberation Sans, sans-serif" font-size="11" fill="#b84f4f" text-anchor="middle" font-weight="400" stroke="#f6f4f0" stroke-width="2.5" paint-order="stroke" stroke-opacity="0.85">العسكرية</text>
<text x="1342.8" y="796.6600000000001" font-family="Liberation Sans, sans-serif" font-size="11" fill="#4a4a50" text-anchor="middle" font-weight="400" stroke="#f6f4f0" stroke-width="2.5" paint-order="stroke" stroke-opacity="0.85">العجبان</text>
<text x="1311.8" y="822.46" font-family="Liberation Sans, sans-serif" font-size="11" fill="#4a4a50" text-anchor="middle" font-weight="400" stroke="#f6f4f0" stroke-width="2.5" paint-order="stroke" stroke-opacity="0.85">نقا الذيب</text>
<text x="1368.6" y="827.6600000000001" font-family="Liberation Sans, sans-serif" font-size="11" fill="#4a4a50" text-anchor="middle" font-weight="400" stroke="#f6f4f0" stroke-width="2.5" paint-order="stroke" stroke-opacity="0.85">سويحان</text>
<text x="1342.8" y="870.6600000000001" font-family="Liberation Sans, sans-serif" font-size="11" fill="#4a4a50" text-anchor="middle" font-weight="400" stroke="#f6f4f0" stroke-width="2.5" paint-order="stroke" stroke-opacity="0.85">رملة سويحان</text>
<text x="1430" y="810.96" font-family="Liberation Sans, sans-serif" font-size="11" fill="#4a4a50" text-anchor="middle" font-weight="400" stroke="#f6f4f0" stroke-width="2.5" paint-order="stroke" stroke-opacity="0.85">ناهل</text>
<text x="1454.4" y="657.96" font-family="Liberation Sans, sans-serif" font-size="11" fill="#4a4a50" text-anchor="middle" font-weight="400" stroke="#f6f4f0" stroke-width="2.5" paint-order="stroke" stroke-opacity="0.85">قريطيسه</text>
<text x="1540.8" y="639.9200000000001" font-family="Liberation Sans, sans-serif" font-size="12" fill="#4a4a50" text-anchor="middle" font-weight="400" stroke="#f6f4f0" stroke-width="2.5" paint-order="stroke" stroke-opacity="0.85">المدام</text>
<text x="1555.7" y="708.5600000000001" font-family="Liberation Sans, sans-serif" font-size="11" fill="#4a4a50" text-anchor="middle" font-weight="400" stroke="#f6f4f0" stroke-width="2.5" paint-order="stroke" stroke-opacity="0.85">الشويب</text>
<text x="1563.6" y="612.96" font-family="Liberation Sans, sans-serif" font-size="11" fill="#4a4a50" text-anchor="middle" font-weight="400" stroke="#f6f4f0" stroke-width="2.5" paint-order="stroke" stroke-opacity="0.85">الخوالد</text>
<text x="1559" y="595.96" font-family="Liberation Sans, sans-serif" font-size="11" fill="#4a4a50" text-anchor="middle" font-weight="400" stroke="#f6f4f0" stroke-width="2.5" paint-order="stroke" stroke-opacity="0.85">البحائص</text>
<text x="1661.3" y="679.96" font-family="Liberation Sans, sans-serif" font-size="11" fill="#4a4a50" text-anchor="middle" font-weight="400" stroke="#f6f4f0" stroke-width="2.5" paint-order="stroke" stroke-opacity="0.85">مصفوت</text>
<text x="1482" y="722.36" font-family="Liberation Sans, sans-serif" font-size="11" fill="#4a4a50" text-anchor="middle" font-weight="400" stroke="#f6f4f0" stroke-width="2.5" paint-order="stroke" stroke-opacity="0.85">القفع</text>
<text x="1527.9" y="774.36" font-family="Liberation Sans, sans-serif" font-size="11" fill="#4a4a50" text-anchor="middle" font-weight="400" stroke="#f6f4f0" stroke-width="2.5" paint-order="stroke" stroke-opacity="0.85">الهير</text>
<text x="1612.2" y="853.96" font-family="Liberation Sans, sans-serif" font-size="11" fill="#4a4a50" text-anchor="middle" font-weight="400" stroke="#f6f4f0" stroke-width="2.5" paint-order="stroke" stroke-opacity="0.85">محضة</text>
<text x="1536.6" y="901.36" font-family="Liberation Sans, sans-serif" font-size="11" fill="#4a4a50" text-anchor="middle" font-weight="400" stroke="#f6f4f0" stroke-width="2.5" paint-order="stroke" stroke-opacity="0.85">هيلي</text>
<text x="1527.9" y="928.28" font-family="Liberation Sans, sans-serif" font-size="13" fill="#4a4a50" text-anchor="middle" font-weight="400" stroke="#f6f4f0" stroke-width="2.5" paint-order="stroke" stroke-opacity="0.85">العين</text>
<text x="1470.4" y="585.5600000000001" font-family="Liberation Sans, sans-serif" font-size="11" fill="#4a4a50" text-anchor="middle" font-weight="400" stroke="#f6f4f0" stroke-width="2.5" paint-order="stroke" stroke-opacity="0.85">لهباب</text>
<text x="1487" y="444.65999999999997" font-family="Liberation Sans, sans-serif" font-size="11" fill="#4a4a50" text-anchor="middle" font-weight="400" stroke="#f6f4f0" stroke-width="2.5" paint-order="stroke" stroke-opacity="0.85">الزبير</text>
<text x="1525.4" y="485.56" font-family="Liberation Sans, sans-serif" font-size="11" fill="#4a4a50" text-anchor="middle" font-weight="400" stroke="#f6f4f0" stroke-width="2.5" paint-order="stroke" stroke-opacity="0.85">البطائح</text>
<text x="1578" y="484.96" font-family="Liberation Sans, sans-serif" font-size="11" fill="#4a4a50" text-anchor="middle" font-weight="400" stroke="#f6f4f0" stroke-width="2.5" paint-order="stroke" stroke-opacity="0.85">الذيد</text>
<text x="1569" y="455.96" font-family="Liberation Sans, sans-serif" font-size="11" fill="#4a4a50" text-anchor="middle" font-weight="400" stroke="#f6f4f0" stroke-width="2.5" paint-order="stroke" stroke-opacity="0.85">فلج المعلا</text>
<text x="1630.4" y="465.65999999999997" font-family="Liberation Sans, sans-serif" font-size="11" fill="#4a4a50" text-anchor="middle" font-weight="400" stroke="#f6f4f0" stroke-width="2.5" paint-order="stroke" stroke-opacity="0.85">المنامة</text>
<text x="1580.8" y="546.46" font-family="Liberation Sans, sans-serif" font-size="11" fill="#4a4a50" text-anchor="middle" font-weight="400" stroke="#f6f4f0" stroke-width="2.5" paint-order="stroke" stroke-opacity="0.85">مليحة</text>
<text x="1529" y="546.46" font-family="Liberation Sans, sans-serif" font-size="11" fill="#4a4a50" text-anchor="middle" font-weight="400" stroke="#f6f4f0" stroke-width="2.5" paint-order="stroke" stroke-opacity="0.85">محافر</text>
<text x="823" y="932.96" font-family="Liberation Sans, sans-serif" font-size="11" fill="#4a4a50" text-anchor="middle" font-weight="400" stroke="#f6f4f0" stroke-width="2.5" paint-order="stroke" stroke-opacity="0.85">جزيرة أبو</text>
<text x="823" y="943.96" font-family="Liberation Sans, sans-serif" font-size="11" fill="#4a4a50" text-anchor="middle" font-weight="400" stroke="#f6f4f0" stroke-width="2.5" paint-order="stroke" stroke-opacity="0.85">الأبيض</text>
<text x="779" y="940.6" font-family="Liberation Sans, sans-serif" font-size="10" fill="#4a4a50" text-anchor="middle" font-weight="400" stroke="#f6f4f0" stroke-width="2.5" paint-order="stroke" stroke-opacity="0.85">أبو الأبيض</text>
<text x="1262" y="947.96" font-family="Liberation Sans, sans-serif" font-size="11" fill="#4a4a50" text-anchor="middle" font-weight="400" stroke="#f6f4f0" stroke-width="2.5" paint-order="stroke" stroke-opacity="0.85">الختم</text>
<g fill="rgba(59,130,246,0.05)" stroke="#4f88ec" stroke-width="2.2">
<circle cx="1419" cy="438.5" r="19.5"/><circle cx="1008.7" cy="819" r="8"/><circle cx="1034.4" cy="841" r="19.5"/>
</g>
<path d="M1419.0,438.5 L1402.7,411.2 C1399.1,405.2 1406.0,391.5 1419.0,391.5 C1432.0,391.5 1438.9,405.2 1435.3,411.2 Z" fill="#3b7fee" stroke="#fff" stroke-width="2.6" stroke-linejoin="round"/><circle cx="1419" cy="404.5" r="8.3" fill="#f3f5f9"/><path d="M1419,403.5 v5.5" stroke="#8a3a3a" stroke-width="1.1"/><circle cx="1419" cy="402.5" r="2.7" fill="#e53935"/>
<path d="M1007.5,819.6 L991.2,792.9 C987.6,787.1 994.5,773.6 1007.5,773.6 C1020.5,773.6 1027.4,787.1 1023.8,792.9 Z" fill="#3b7fee" stroke="#fff" stroke-width="2.6" stroke-linejoin="round"/><circle cx="1007.5" cy="786.6" r="8.3" fill="#f3f5f9"/><path d="M1007.5,785.6 v5.5" stroke="#8a3a3a" stroke-width="1.1"/><circle cx="1007.5" cy="784.6" r="2.7" fill="#e53935"/>
<path d="M1034.4,841.0 L1018.1,813.9 C1014.5,808.0 1021.4,794.3 1034.4,794.3 C1047.4,794.3 1054.3,808.0 1050.7,813.9 Z" fill="#3b7fee" stroke="#fff" stroke-width="2.6" stroke-linejoin="round"/><circle cx="1034.4" cy="807.3" r="8.3" fill="#f3f5f9"/><path d="M1034.4,806.3 v5.5" stroke="#8a3a3a" stroke-width="1.1"/><circle cx="1034.4" cy="805.3" r="2.7" fill="#e53935"/>
<circle cx="1075.5" cy="862" r="8.2" fill="#fff"/><circle cx="1075.5" cy="862" r="6" fill="#3c80ef"/>
</svg>
</div>
<div class="zb" style="top:266px"></div>
<svg style="position:absolute;left:769px;top:277px" width="11" height="11" viewBox="0 0 11 11"><path d="M5.5 0.5v10M0.5 5.5h10" stroke="#111" stroke-width="2"/></svg>
<div class="zb" style="top:307px"></div>
<svg style="position:absolute;left:769px;top:318px" width="11" height="11" viewBox="0 0 11 11"><path d="M0.5 5.5h10" stroke="#111" stroke-width="2"/></svg>

<!-- FOOTER -->
<div style="position:absolute;left:271px;top:944px;width:1474px;height:56px;background:#fff"></div>
<div style="position:absolute;left:0;top:993px;width:271px;height:7px;background:#fff"></div>
<div style="position:absolute;left:858px;top:964px;font-size:14.2px;line-height:16px;color:#6b7280">© 2026 Trasealla Solutions — All rights reserved</div>

</body></html>
